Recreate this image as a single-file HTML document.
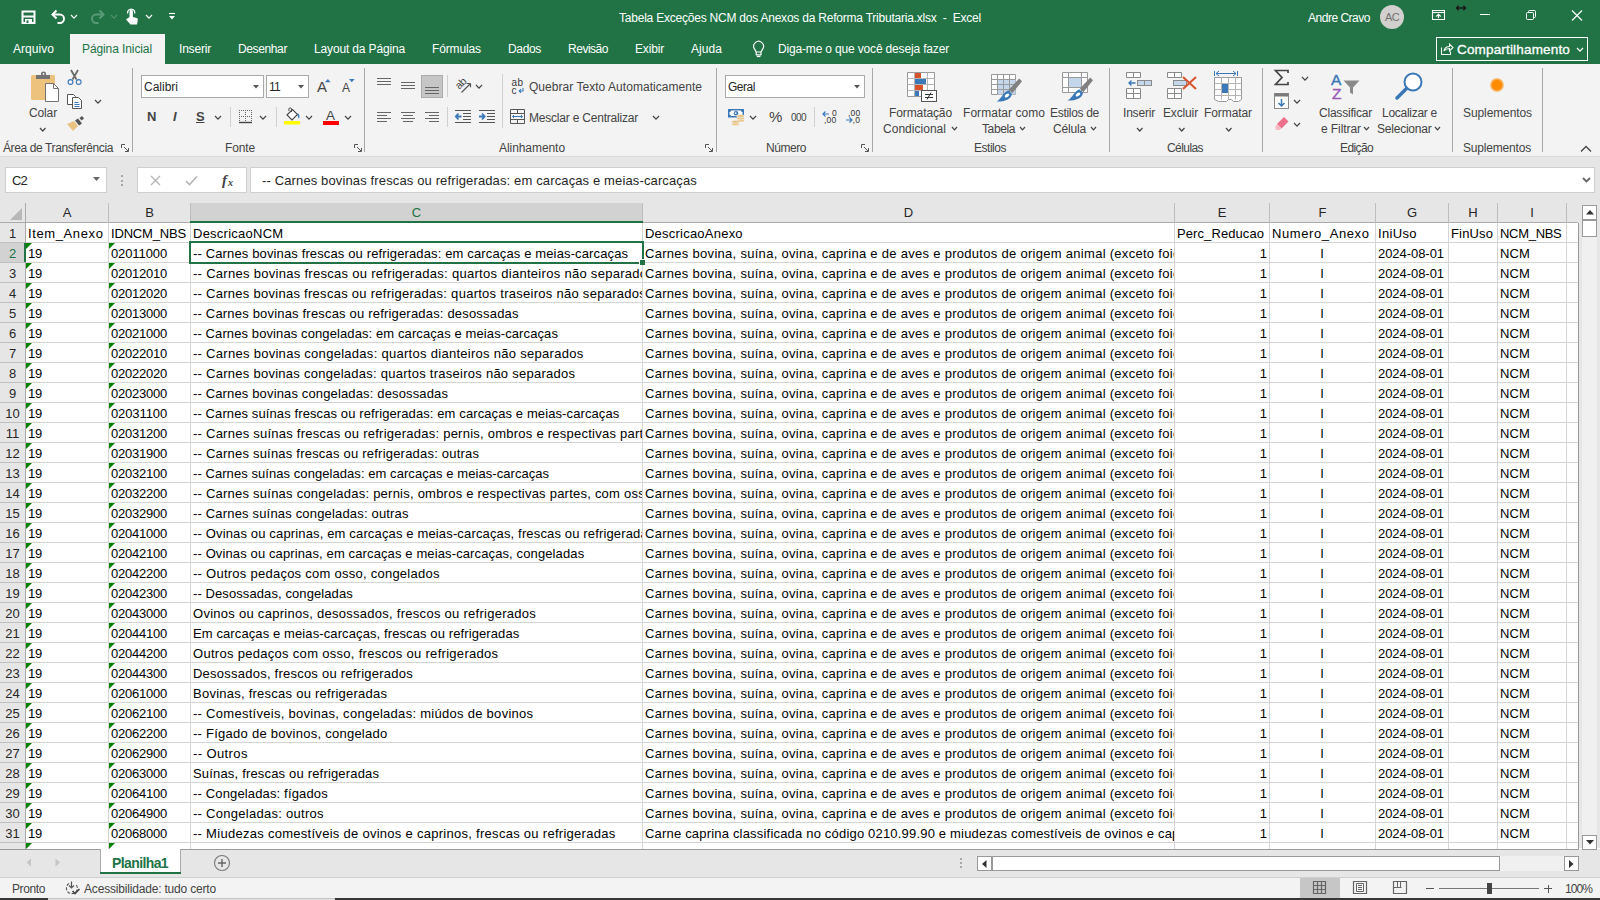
<!DOCTYPE html>
<html lang="pt-BR"><head><meta charset="utf-8"><title>Tabela Exceções NCM dos Anexos da Reforma Tributaria.xlsx - Excel</title>
<style>
html,body{margin:0;padding:0;}
body{width:1600px;height:900px;overflow:hidden;position:relative;background:#fff;font-family:'Liberation Sans',sans-serif;}
.a{position:absolute;box-sizing:border-box;overflow:visible;}
.t{position:absolute;white-space:pre;}
</style></head><body>
<div class="a" style="left:0px;top:0px;width:1600px;height:64px;background:#217346;"></div>
<div class="a" style="left:0px;top:64px;width:1600px;height:92px;background:#f3f3f3;"></div>
<div class="a" style="left:0px;top:156px;width:1600px;height:1px;background:#dadada;"></div>
<div class="a" style="left:0px;top:157px;width:1600px;height:46px;background:#e6e6e6;"></div>
<div class="a" style="left:0px;top:203px;width:1600px;height:20px;background:#e6e6e6;"></div>
<div class="a" style="left:0px;top:849px;width:1600px;height:28px;background:#e6e6e6;"></div>
<div class="a" style="left:0px;top:877px;width:1600px;height:21px;background:#f3f3f3;"></div>
<div class="a" style="left:0px;top:877px;width:1600px;height:1px;background:#cfcfcf;"></div>
<div class="a" style="left:0px;top:898px;width:1600px;height:2px;background:#363636;"></div>
<div class="a" style="left:48px;top:898px;width:287px;height:1px;background:#c4c4c4;"></div>
<div class="a" style="left:48px;top:899px;width:287px;height:1px;background:#e0e0e0;"></div>
<span class="t" style="top:8.5px;height:18px;line-height:18px;font-size:12px;color:#fff;left:619px;letter-spacing:-0.221px;">Tabela Exceções NCM dos Anexos da Reforma Tributaria.xlsx  -  Excel</span>
<span class="t" style="top:8.5px;height:18px;line-height:18px;font-size:12px;color:#fff;left:1308px;letter-spacing:-0.489px;">Andre Cravo</span>
<div class="a" style="left:1380px;top:5px;width:24px;height:24px;border-radius:12px;background:#d2d0ce;"></div>
<span class="t" style="top:9px;height:17px;line-height:17px;font-size:11px;color:#707070;left:1385px;letter-spacing:-0.641px;">AC</span>
<svg class="a" style="left:1432px;top:10px;" width="16" height="14" viewBox="0 0 16 14"><path d="M0.5 0.5h12v9h-12z" fill="none" stroke="#fff" stroke-width="1.1"/><path d="M0.5 2.5h12" stroke="#fff" stroke-width="1.1"/><path d="M6.5 8.3V4.5M4.3 6.5L6.5 4.3l2.2 2.2" fill="none" stroke="#fff" stroke-width="1.1"/></svg>
<svg class="a" style="left:1455px;top:3px;" width="14" height="10" viewBox="0 0 14 10"><path d="M1.5 5h9M3.7 2.7L1.4 5l2.3 2.3M8.3 2.7L10.6 5 8.3 7.3" fill="none" stroke="#1a1a1a" stroke-width="1.4"/></svg>
<div class="a" style="left:1480px;top:14px;width:10px;height:1px;background:#fff;"></div>
<svg class="a" style="left:1526px;top:10px;" width="13" height="13" viewBox="0 0 13 13"><rect x="0.5" y="2.5" width="7" height="7" rx="1" fill="none" stroke="#fff"/><path d="M2.5 2.5V1.5a1 1 0 0 1 1-1h5a1 1 0 0 1 1 1v5a1 1 0 0 1-1 1H7.5" fill="none" stroke="#fff"/></svg>
<svg class="a" style="left:1571px;top:10px;" width="13" height="13" viewBox="0 0 13 13"><path d="M1 0.5L11 10.5M11 0.5L1 10.5" fill="none" stroke="#fff" stroke-width="1.1"/></svg>
<svg class="a" style="left:21px;top:10px;" width="16" height="15" viewBox="0 0 16 15"><path d="M1.5 1.5h12v11.5h-12z" fill="none" stroke="#fff" stroke-width="2"/><path d="M2 6.5h11" stroke="#fff" stroke-width="2"/><rect x="4" y="9" width="7" height="4" fill="#fff"/><rect x="5.5" y="10.5" width="2" height="2.5" fill="#217346"/></svg>
<svg class="a" style="left:50px;top:9px;" width="17" height="16" viewBox="0 0 17 16"><path d="M2.5 5.5h7.3a4.2 4.2 0 0 1 0 8.4H7.5" fill="none" stroke="#fff" stroke-width="2"/><path d="M6.5 1.5L2.5 5.5 6.5 9.5" fill="none" stroke="#fff" stroke-width="2"/></svg>
<svg class="a" style="left:70px;top:14px;" width="8" height="5.2" viewBox="0 0 8 5.2"><path d="M1 1 L4.0 4.2 L7 1" fill="none" stroke="#fff" stroke-width="1.2"/></svg>
<svg class="a" style="left:89px;top:9px;" width="17" height="16" viewBox="0 0 17 16"><path d="M14.5 5.5H7.2a4.2 4.2 0 0 0 0 8.4H9.5" fill="none" stroke="#5a9a78" stroke-width="2"/><path d="M10.5 1.5L14.5 5.5 10.5 9.5" fill="none" stroke="#5a9a78" stroke-width="2"/></svg>
<svg class="a" style="left:110px;top:14px;" width="8" height="5.2" viewBox="0 0 8 5.2"><path d="M1 1 L4.0 4.2 L7 1" fill="none" stroke="#4f8f6b" stroke-width="1.2"/></svg>
<svg class="a" style="left:124px;top:8px;" width="16" height="18" viewBox="0 0 16 18"><path d="M5.5 9V3.5a1.7 1.7 0 0 1 3.4 0V9l3.6 1c1 .300 1.5 1 1.3 2l-.800 4.5H6.5L2.5 12c-.600-.800 0-1.8 1-1.5z" fill="#fff"/><path d="M3.7 5.5a3.6 3.6 0 1 1 7 0" fill="none" stroke="#fff" stroke-width="1.3"/></svg>
<svg class="a" style="left:145px;top:14px;" width="8" height="5.2" viewBox="0 0 8 5.2"><path d="M1 1 L4.0 4.2 L7 1" fill="none" stroke="#fff" stroke-width="1.2"/></svg>
<svg class="a" style="left:168px;top:12px;" width="9" height="9" viewBox="0 0 9 9"><path d="M1 1.5h6" stroke="#fff" stroke-width="1.2"/><path d="M1 4h6L4 7.5z" fill="#fff"/></svg>
<div class="a" style="left:70px;top:34px;width:95px;height:30px;background:#f3f3f3;"></div>
<span class="t" style="top:40px;height:18px;line-height:18px;font-size:12px;color:#fff;left:13px;letter-spacing:0.045px;">Arquivo</span>
<span class="t" style="top:40px;height:18px;line-height:18px;font-size:12px;color:#217346;left:82px;letter-spacing:-0.099px;">Página Inicial</span>
<span class="t" style="top:40px;height:18px;line-height:18px;font-size:12px;color:#fff;left:179px;letter-spacing:-0.192px;">Inserir</span>
<span class="t" style="top:40px;height:18px;line-height:18px;font-size:12px;color:#fff;left:238px;letter-spacing:-0.379px;">Desenhar</span>
<span class="t" style="top:40px;height:18px;line-height:18px;font-size:12px;color:#fff;left:314px;letter-spacing:-0.151px;">Layout da Página</span>
<span class="t" style="top:40px;height:18px;line-height:18px;font-size:12px;color:#fff;left:432px;letter-spacing:-0.127px;">Fórmulas</span>
<span class="t" style="top:40px;height:18px;line-height:18px;font-size:12px;color:#fff;left:508px;letter-spacing:-0.338px;">Dados</span>
<span class="t" style="top:40px;height:18px;line-height:18px;font-size:12px;color:#fff;left:568px;letter-spacing:-0.48px;">Revisão</span>
<span class="t" style="top:40px;height:18px;line-height:18px;font-size:12px;color:#fff;left:635px;letter-spacing:-0.169px;">Exibir</span>
<span class="t" style="top:40px;height:18px;line-height:18px;font-size:12px;color:#fff;left:691px;letter-spacing:0.059px;">Ajuda</span>
<span class="t" style="top:40px;height:18px;line-height:18px;font-size:12px;color:#fff;left:778px;letter-spacing:-0.165px;">Diga-me o que você deseja fazer</span>
<svg class="a" style="left:752px;top:40px;" width="14" height="18" viewBox="0 0 14 18"><path d="M4.2 12L2.6 9.1A4.9 4.9 0 1 1 10.6 9.1L9 12zM4.2 12v2.8h4.8V12" fill="none" stroke="#fff" stroke-width="1.2" stroke-linejoin="round"/><path d="M4.8 16.5h3.6" stroke="#fff" stroke-width="1.2"/></svg>
<div class="a" style="left:1436px;top:37px;width:152px;height:24px;border:1px solid #fff;"></div>
<svg class="a" style="left:1440px;top:42px;" width="14" height="14" viewBox="0 0 14 14"><path d="M1.5 5.5v7h9v-3" fill="none" stroke="#fff" stroke-width="1.1"/><path d="M4 9c.500-3 2.5-4.5 5.5-4.5V2l3.5 3.5L9.5 9V6.5C7 6.5 5.5 7 4 9z" fill="none" stroke="#fff" stroke-width="1.1"/></svg>
<span class="t" style="top:39.75px;height:19.5px;line-height:19.5px;font-size:13.5px;color:#fff;left:1457px;letter-spacing:0.168px;-webkit-text-stroke:0.3px #fff;">Compartilhamento</span>
<svg class="a" style="left:1576px;top:47px;" width="8" height="5.2" viewBox="0 0 8 5.2"><path d="M1 1 L4.0 4.2 L7 1" fill="none" stroke="#fff" stroke-width="1.2"/></svg>
<div class="a" style="left:132px;top:68px;width:1px;height:84px;background:#a8a8a8;"></div>
<div class="a" style="left:364px;top:68px;width:1px;height:84px;background:#a8a8a8;"></div>
<div class="a" style="left:716px;top:68px;width:1px;height:84px;background:#a8a8a8;"></div>
<div class="a" style="left:872px;top:68px;width:1px;height:84px;background:#a8a8a8;"></div>
<div class="a" style="left:1109px;top:68px;width:1px;height:84px;background:#a8a8a8;"></div>
<div class="a" style="left:1262px;top:68px;width:1px;height:84px;background:#a8a8a8;"></div>
<div class="a" style="left:1452px;top:68px;width:1px;height:84px;background:#a8a8a8;"></div>
<div class="a" style="left:1542px;top:68px;width:1px;height:84px;background:#a8a8a8;"></div>
<div class="a" style="left:230px;top:107px;width:1px;height:20px;background:#d0d0d0;"></div>
<div class="a" style="left:276px;top:107px;width:1px;height:20px;background:#d0d0d0;"></div>
<div class="a" style="left:447px;top:75px;width:1px;height:22px;background:#d0d0d0;"></div>
<div class="a" style="left:447px;top:107px;width:1px;height:20px;background:#d0d0d0;"></div>
<div class="a" style="left:502px;top:74px;width:1px;height:54px;background:#d0d0d0;"></div>
<div class="a" style="left:814px;top:107px;width:1px;height:20px;background:#d0d0d0;"></div>
<span class="t" style="top:138.5px;height:18px;line-height:18px;font-size:12px;color:#444444;left:3px;letter-spacing:-0.385px;">Área de Transferência</span>
<span class="t" style="top:138.5px;height:18px;line-height:18px;font-size:12px;color:#444444;left:225px;letter-spacing:-0.138px;">Fonte</span>
<span class="t" style="top:138.5px;height:18px;line-height:18px;font-size:12px;color:#444444;left:499px;letter-spacing:-0.065px;">Alinhamento</span>
<span class="t" style="top:138.5px;height:18px;line-height:18px;font-size:12px;color:#444444;left:766px;letter-spacing:-0.448px;">Número</span>
<span class="t" style="top:138.5px;height:18px;line-height:18px;font-size:12px;color:#444444;left:974px;letter-spacing:-0.478px;">Estilos</span>
<span class="t" style="top:138.5px;height:18px;line-height:18px;font-size:12px;color:#444444;left:1167px;letter-spacing:-0.576px;">Células</span>
<span class="t" style="top:138.5px;height:18px;line-height:18px;font-size:12px;color:#444444;left:1340px;letter-spacing:-0.617px;">Edição</span>
<span class="t" style="top:138.5px;height:18px;line-height:18px;font-size:12px;color:#444444;left:1463px;letter-spacing:-0.186px;">Suplementos</span>
<svg class="a" style="left:121px;top:144px;" width="8" height="8" viewBox="0 0 8 8"><path d="M0.5 4V0.5H4" fill="none" stroke="#555"/><path d="M3 3l4 4M7.5 4v3.5H4" fill="none" stroke="#555"/></svg>
<svg class="a" style="left:354px;top:144px;" width="8" height="8" viewBox="0 0 8 8"><path d="M0.5 4V0.5H4" fill="none" stroke="#555"/><path d="M3 3l4 4M7.5 4v3.5H4" fill="none" stroke="#555"/></svg>
<svg class="a" style="left:705px;top:144px;" width="8" height="8" viewBox="0 0 8 8"><path d="M0.5 4V0.5H4" fill="none" stroke="#555"/><path d="M3 3l4 4M7.5 4v3.5H4" fill="none" stroke="#555"/></svg>
<svg class="a" style="left:861px;top:144px;" width="8" height="8" viewBox="0 0 8 8"><path d="M0.5 4V0.5H4" fill="none" stroke="#555"/><path d="M3 3l4 4M7.5 4v3.5H4" fill="none" stroke="#555"/></svg>
<svg class="a" style="left:1580px;top:145px;" width="12" height="8" viewBox="0 0 12 8"><path d="M1 6.5L6 1.5l5 5" fill="none" stroke="#444" stroke-width="1.3"/></svg>
<svg class="a" style="left:30px;top:70px;" width="30" height="32" viewBox="0 0 30 32"><rect x="1" y="5" width="24" height="25" rx="1.5" fill="#ecc27d"/><rect x="6" y="5" width="14" height="4" fill="#737373"/><path d="M11 5.5V3.5a2.5 2 0 0 1 5 0V5.5z" fill="#737373"/><circle cx="13.5" cy="4" r="0.9" fill="#f3f3f3"/><path d="M15.5 13.5h8l5 5v13h-13z" fill="#fff" stroke="#737373"/><path d="M23.5 13.5v5h5" fill="none" stroke="#737373"/></svg>
<span class="t" style="top:103.5px;height:18px;line-height:18px;font-size:12px;color:#444444;left:29px;letter-spacing:-0.138px;">Colar</span>
<svg class="a" style="left:38.5px;top:126.5px;" width="7.5" height="5" viewBox="0 0 7.5 5"><path d="M1 1 L3.75 4 L6.5 1" fill="none" stroke="#444444" stroke-width="1.2"/></svg>
<svg class="a" style="left:66px;top:69px;" width="17" height="17" viewBox="0 0 17 17"><path d="M5 1l5.5 9.5M12 1L6.5 10.5" stroke="#6a6a6a" stroke-width="1.8" fill="none"/><circle cx="4.5" cy="13" r="2.4" fill="none" stroke="#3b78b8" stroke-width="1.1"/><circle cx="12.7" cy="13" r="2.4" fill="none" stroke="#3b78b8" stroke-width="1.1"/></svg>
<svg class="a" style="left:66px;top:92px;" width="17" height="17" viewBox="0 0 17 17"><path d="M1.5 2.5h6l2 2v8h-8z" fill="#fff" stroke="#555"/><path d="M6.5 5.5h6l3 3v8h-9z" fill="#fff" stroke="#555"/><path d="M8.5 10.5h4M8.5 12.5h5M8.5 14.5h5" stroke="#3b78b8"/></svg>
<svg class="a" style="left:93.5px;top:99px;" width="8" height="5.2" viewBox="0 0 8 5.2"><path d="M1 1 L4.0 4.2 L7 1" fill="none" stroke="#444444" stroke-width="1.2"/></svg>
<svg class="a" style="left:66px;top:115px;" width="19" height="17" viewBox="0 0 19 17"><path d="M1 9l7-3 4 5-5 5z" fill="#eac282"/><path d="M9 5.5l3-2 4 5-3 2z" fill="#555"/><path d="M13.5 3L16 1l2 2.5-2.5 2z" fill="#555"/></svg>
<div class="a" style="left:141px;top:75px;width:123px;height:23px;background:#fff;border:1px solid #ababab;"></div>
<span class="t" style="top:78px;height:18px;line-height:18px;font-size:12px;color:#262626;left:144px;letter-spacing:-0.002px;">Calibri</span>
<div class="a" style="left:266px;top:75px;width:43px;height:23px;background:#fff;border:1px solid #ababab;"></div>
<span class="t" style="top:78px;height:18px;line-height:18px;font-size:12px;color:#262626;left:269px;letter-spacing:-0.734px;">11</span>
<svg class="a" style="left:253px;top:85px;" width="7" height="4" viewBox="0 0 7 4"><path d="M0 0h6L3 3.5z" fill="#555"/></svg>
<svg class="a" style="left:298px;top:85px;" width="7" height="4" viewBox="0 0 7 4"><path d="M0 0h6L3 3.5z" fill="#555"/></svg>
<span class="t" style="top:75.5px;height:21px;line-height:21px;font-size:15px;color:#444444;left:317px;letter-spacing:0.984px;">A</span>
<svg class="a" style="left:324.5px;top:79px;" width="6" height="4" viewBox="0 0 6 4"><path d="M0 3.2h5.6L2.8 0z" fill="#3b78b8"/></svg>
<span class="t" style="top:79px;height:18px;line-height:18px;font-size:12px;color:#444444;left:342px;letter-spacing:-0.016px;">A</span>
<svg class="a" style="left:348.5px;top:79px;" width="6" height="4" viewBox="0 0 6 4"><path d="M0 0h5.6L2.8 3.2z" fill="#3b78b8"/></svg>
<span class="t" style="top:106.5px;height:19px;line-height:19px;font-size:13px;color:#444444;left:147px;font-weight:bold;letter-spacing:0.609px;">N</span>
<span class="t" style="top:106.5px;height:19px;line-height:19px;font-size:13px;color:#444444;left:173px;font-weight:bold;font-style:italic;letter-spacing:1.375px;">I</span>
<span class="t" style="top:106.5px;height:19px;line-height:19px;font-size:13px;color:#444444;left:196px;font-weight:bold;letter-spacing:-0.172px;text-decoration:underline;">S</span>
<svg class="a" style="left:214px;top:115px;" width="8" height="5.2" viewBox="0 0 8 5.2"><path d="M1 1 L4.0 4.2 L7 1" fill="none" stroke="#444444" stroke-width="1.2"/></svg>
<svg class="a" style="left:239px;top:110px;" width="14" height="14" viewBox="0 0 14 14"><path d="M0 0.5h13M0 6.5h13M0.5 0v13M6.5 0v13M12.5 0v13" fill="none" stroke="#666" stroke-dasharray="1 1"/><path d="M0 12.5h13" stroke="#444" stroke-width="1.4"/></svg>
<svg class="a" style="left:259px;top:115px;" width="8" height="5.2" viewBox="0 0 8 5.2"><path d="M1 1 L4.0 4.2 L7 1" fill="none" stroke="#444444" stroke-width="1.2"/></svg>
<svg class="a" style="left:284px;top:108px;" width="18" height="17" viewBox="0 0 18 17"><rect x="0" y="13" width="16" height="3.5" fill="#ffff00"/><path d="M3 7L8.5 1.5l5 5L8 12z" fill="#fff" stroke="#444" stroke-width="1.1"/><path d="M7.5 4V1.2a1.3 1.3 0 0 0-2.6 0V3" fill="none" stroke="#444"/><path d="M13.5 5c2 1 2.5 3.5 1.5 6-1-1.5-1.5-3-1.5-6z" fill="#3b78b8"/></svg>
<svg class="a" style="left:305px;top:115px;" width="8" height="5.2" viewBox="0 0 8 5.2"><path d="M1 1 L4.0 4.2 L7 1" fill="none" stroke="#444444" stroke-width="1.2"/></svg>
<span class="t" style="top:105.75px;height:19.5px;line-height:19.5px;font-size:13.5px;color:#444444;left:326px;letter-spacing:0.984px;">A</span>
<div class="a" style="left:323px;top:121px;width:16px;height:4px;background:#ff0000;"></div>
<svg class="a" style="left:344px;top:115px;" width="8" height="5.2" viewBox="0 0 8 5.2"><path d="M1 1 L4.0 4.2 L7 1" fill="none" stroke="#444444" stroke-width="1.2"/></svg>
<svg class="a" style="left:377px;top:78px;" width="16" height="9" viewBox="0 0 16 9"><rect x="0" y="0" width="14" height="1" fill="#666"/><rect x="0" y="3" width="14" height="1" fill="#666"/><rect x="0" y="6" width="14" height="1" fill="#666"/></svg>
<svg class="a" style="left:401px;top:82px;" width="16" height="9" viewBox="0 0 16 9"><rect x="0" y="0" width="14" height="1" fill="#666"/><rect x="0" y="3" width="14" height="1" fill="#666"/><rect x="0" y="6" width="14" height="1" fill="#666"/></svg>
<div class="a" style="left:421px;top:75px;width:22px;height:23px;background:#c6c6c6;border:1px solid #ababab;"></div>
<svg class="a" style="left:425px;top:87px;" width="16" height="9" viewBox="0 0 16 9"><rect x="0" y="0" width="14" height="1" fill="#666"/><rect x="0" y="3" width="14" height="1" fill="#666"/><rect x="0" y="6" width="14" height="1" fill="#666"/></svg>
<svg class="a" style="left:455px;top:77px;" width="18" height="18" viewBox="0 0 18 18"><path d="M6.5 15.5L15.5 6.5M15.5 6.5h-3.8M15.5 6.5v3.8" fill="none" stroke="#555" stroke-width="1.2"/></svg>
<span class="t" style="top:74.75px;height:16.5px;line-height:16.5px;font-size:10.5px;color:#444;left:454.5px;letter-spacing:-0.344px;transform:rotate(-45deg);">ab</span>
<svg class="a" style="left:474.5px;top:84px;" width="8" height="5.2" viewBox="0 0 8 5.2"><path d="M1 1 L4.0 4.2 L7 1" fill="none" stroke="#444444" stroke-width="1.2"/></svg>
<span class="t" style="top:74.5px;height:16px;line-height:16px;font-size:10px;color:#3a3a3a;left:511.5px;letter-spacing:0.438px;">ab</span>
<span class="t" style="top:82.5px;height:16px;line-height:16px;font-size:10px;color:#3a3a3a;left:511.5px;letter-spacing:1px;">c</span>
<svg class="a" style="left:518px;top:87.5px;" width="7" height="6" viewBox="0 0 7 6"><path d="M5 0v3H1.5M3 1.2L1.2 3l1.8 1.8" fill="none" stroke="#3b78b8" stroke-width="1.1"/></svg>
<span class="t" style="top:78px;height:18px;line-height:18px;font-size:12px;color:#444444;left:529px;letter-spacing:0.039px;">Quebrar Texto Automaticamente</span>
<svg class="a" style="left:377px;top:112px;" width="16" height="12" viewBox="0 0 16 12"><rect x="0" y="0" width="14" height="1" fill="#666"/><rect x="0" y="3" width="10" height="1" fill="#666"/><rect x="0" y="6" width="14" height="1" fill="#666"/><rect x="0" y="9" width="10" height="1" fill="#666"/></svg>
<svg class="a" style="left:401px;top:112px;" width="16" height="12" viewBox="0 0 16 12"><rect x="0" y="0" width="14" height="1" fill="#666"/><rect x="2" y="3" width="10" height="1" fill="#666"/><rect x="0" y="6" width="14" height="1" fill="#666"/><rect x="2" y="9" width="10" height="1" fill="#666"/></svg>
<svg class="a" style="left:425px;top:112px;" width="16" height="12" viewBox="0 0 16 12"><rect x="0" y="0" width="14" height="1" fill="#666"/><rect x="4" y="3" width="10" height="1" fill="#666"/><rect x="0" y="6" width="14" height="1" fill="#666"/><rect x="4" y="9" width="10" height="1" fill="#666"/></svg>
<svg class="a" style="left:455px;top:110px;" width="17" height="14" viewBox="0 0 17 14"><path d="M0 0.5h16M8 3.5h8M8 6.5h8M8 9.5h8M0 12.5h16" stroke="#555"/><path d="M6.5 6.5h-5.5M3.5 3.5L0.8 6.5 3.5 9.5" fill="none" stroke="#3b78b8" stroke-width="1.8"/></svg>
<svg class="a" style="left:479px;top:110px;" width="17" height="14" viewBox="0 0 17 14"><path d="M0 0.5h16M8 3.5h8M8 6.5h8M8 9.5h8M0 12.5h16" stroke="#555"/><path d="M0 6.5h5.5M3 3.5L5.7 6.5 3 9.5" fill="none" stroke="#3b78b8" stroke-width="1.8"/></svg>
<svg class="a" style="left:510px;top:109px;" width="16" height="16" viewBox="0 0 16 16"><path d="M0.5 0.5h14v14h-14zM0.5 4.5h14M0.5 10.5h14M7.5 0.5v4M7.5 10.5v4" fill="none" stroke="#555"/><path d="M2.5 7.5h10M4 6l-1.5 1.5L4 9M11 6l1.5 1.5L11 9" fill="none" stroke="#3b78b8"/></svg>
<span class="t" style="top:108.5px;height:18px;line-height:18px;font-size:12px;color:#444444;left:529px;letter-spacing:-0.208px;">Mesclar e Centralizar</span>
<svg class="a" style="left:652px;top:115px;" width="8" height="5.2" viewBox="0 0 8 5.2"><path d="M1 1 L4.0 4.2 L7 1" fill="none" stroke="#444444" stroke-width="1.2"/></svg>
<div class="a" style="left:725px;top:75px;width:140px;height:23px;background:#fff;border:1px solid #ababab;"></div>
<span class="t" style="top:78px;height:18px;line-height:18px;font-size:12px;color:#262626;left:728px;letter-spacing:-0.469px;">Geral</span>
<svg class="a" style="left:854px;top:85px;" width="7" height="4" viewBox="0 0 7 4"><path d="M0 0h6L3 3.5z" fill="#555"/></svg>
<svg class="a" style="left:727px;top:108px;" width="19" height="19" viewBox="0 0 19 19"><rect x="1" y="1" width="16" height="8.5" fill="#3b78b8"/><path d="M4 2.5h10a1.5 1.5 0 0 0 1.5 1.5v2.5a1.5 1.5 0 0 0-1.5 1.5H4a1.5 1.5 0 0 0-1.5-1.5V4A1.5 1.5 0 0 0 4 2.5z" fill="#fff"/><circle cx="9" cy="5.2" r="2.3" fill="#3b78b8"/><circle cx="8.6" cy="5.2" r="0.9" fill="#fff"/><g fill="#eac282" stroke="#f3f3f3" stroke-width="0.6"><ellipse cx="13.5" cy="12.5" rx="3.8" ry="1.5"/><ellipse cx="13.5" cy="10.3" rx="3.8" ry="1.5"/><ellipse cx="13.5" cy="8.1" rx="3.8" ry="1.5"/><ellipse cx="8.5" cy="16" rx="3.8" ry="1.5"/><ellipse cx="8.5" cy="13.8" rx="3.8" ry="1.5"/></g></svg>
<svg class="a" style="left:749px;top:115px;" width="8" height="5.2" viewBox="0 0 8 5.2"><path d="M1 1 L4.0 4.2 L7 1" fill="none" stroke="#444444" stroke-width="1.2"/></svg>
<span class="t" style="top:106px;height:21px;line-height:21px;font-size:15px;color:#444444;left:769px;letter-spacing:-0.344px;">%</span>
<span class="t" style="top:109.5px;height:16px;line-height:16px;font-size:10px;color:#444444;left:791px;letter-spacing:-0.562px;">000</span>
<span class="t" style="top:105.75px;height:14.5px;line-height:14.5px;font-size:8.5px;color:#333;left:832px;letter-spacing:0.266px;">0</span>
<span class="t" style="top:113.25px;height:14.5px;line-height:14.5px;font-size:8.5px;color:#333;left:824px;letter-spacing:0.224px;">,00</span>
<svg class="a" style="left:821.5px;top:110.5px;" width="8" height="6" viewBox="0 0 8 6"><path d="M7 3H1M3.5 0.5L1 3l2.5 2.5" fill="none" stroke="#3b78b8" stroke-width="1.2"/></svg>
<span class="t" style="top:105.75px;height:14.5px;line-height:14.5px;font-size:8.5px;color:#333;left:848px;letter-spacing:0.224px;">,00</span>
<span class="t" style="top:113.25px;height:14.5px;line-height:14.5px;font-size:8.5px;color:#333;left:852.5px;letter-spacing:0.453px;">,0</span>
<svg class="a" style="left:846px;top:117px;" width="8" height="6" viewBox="0 0 8 6"><path d="M0 3h6M3.5 0.5L6 3 3.5 5.5" fill="none" stroke="#3b78b8" stroke-width="1.2"/></svg>
<svg class="a" style="left:907px;top:72px;" width="32" height="32" viewBox="0 0 32 32"><path d="M0.5 0.5h27v24h-27z" fill="#fff" stroke="#9a9a9a"/><path d="M0.5 6.5h27M0.5 12.5h27M0.5 18.5h27M7.5 0.5v24M20.5 0.5v24" stroke="#b5b5b5" fill="none"/><rect x="8" y="1" width="6" height="5" fill="#d8532b"/><rect x="8" y="7" width="11" height="5" fill="#3b78b8"/><rect x="8" y="13" width="8" height="5" fill="#d8532b"/><rect x="8" y="19" width="4" height="5" fill="#3b78b8"/><rect x="14.5" y="18.5" width="15" height="11" fill="#fff" stroke="#555"/><path d="M18 22.5h8M18 25.5h8M24 20.5l-4 7" stroke="#333" fill="none"/></svg>
<span class="t" style="top:103.5px;height:18px;line-height:18px;font-size:12px;color:#444444;left:889px;letter-spacing:-0.103px;">Formatação</span>
<span class="t" style="top:119.5px;height:18px;line-height:18px;font-size:12px;color:#444444;left:883px;letter-spacing:0.026px;">Condicional</span>
<svg class="a" style="left:950.5px;top:126px;" width="7" height="4.8" viewBox="0 0 7 4.8"><path d="M1 1 L3.5 3.8 L6 1" fill="none" stroke="#444444" stroke-width="1.2"/></svg>
<svg class="a" style="left:991px;top:74px;" width="32" height="30" viewBox="0 0 32 30"><path d="M0.5 0.5h24v20h-24z" fill="#fff" stroke="#9a9a9a"/><rect x="6.5" y="5.5" width="18" height="15" fill="#c3d6ec"/><path d="M0.5 5.5h24M0.5 10.5h24M0.5 15.5h24M6.5 0.5v20M12.5 0.5v20M18.5 0.5v20" stroke="#9a9a9a" fill="none"/><g transform="translate(0 0)"><path d="M28.2 4.5L31 7.3 21.3 19.3 17.8 15.8z" fill="#808080"/><path d="M17.3 16.3L21 20C20 25.5 13.5 27.8 5.5 27.6 10.5 25 11.5 19 17.3 16.3z" fill="#3b78b8"/><ellipse cx="16" cy="21.5" rx="2.6" ry="1.6" fill="#fff" transform="rotate(-35 16 21.5)"/></g></svg>
<span class="t" style="top:103.5px;height:18px;line-height:18px;font-size:12px;color:#444444;left:963px;letter-spacing:0.049px;">Formatar como</span>
<span class="t" style="top:119.5px;height:18px;line-height:18px;font-size:12px;color:#444444;left:982px;letter-spacing:-0.396px;">Tabela</span>
<svg class="a" style="left:1018.5px;top:126px;" width="7" height="4.8" viewBox="0 0 7 4.8"><path d="M1 1 L3.5 3.8 L6 1" fill="none" stroke="#444444" stroke-width="1.2"/></svg>
<svg class="a" style="left:1062px;top:72px;" width="32" height="30" viewBox="0 0 32 30"><path d="M0.5 0.5h25v20h-25z" fill="#fff" stroke="#9a9a9a"/><rect x="6.5" y="5.5" width="13" height="10" fill="#c3d6ec"/><path d="M0.5 5.5h25M0.5 15.5h25M6.5 0.5v20M19.5 0.5v20" stroke="#9a9a9a" fill="none"/><g transform="translate(0 1)"><path d="M28.2 4.5L31 7.3 21.3 19.3 17.8 15.8z" fill="#808080"/><path d="M17.3 16.3L21 20C20 25.5 13.5 27.8 5.5 27.6 10.5 25 11.5 19 17.3 16.3z" fill="#3b78b8"/><ellipse cx="16" cy="21.5" rx="2.6" ry="1.6" fill="#fff" transform="rotate(-35 16 21.5)"/></g></svg>
<span class="t" style="top:103.5px;height:18px;line-height:18px;font-size:12px;color:#444444;left:1050px;letter-spacing:-0.303px;">Estilos de</span>
<span class="t" style="top:119.5px;height:18px;line-height:18px;font-size:12px;color:#444444;left:1053px;letter-spacing:-0.172px;">Célula</span>
<svg class="a" style="left:1089.5px;top:126px;" width="7" height="4.8" viewBox="0 0 7 4.8"><path d="M1 1 L3.5 3.8 L6 1" fill="none" stroke="#444444" stroke-width="1.2"/></svg>
<svg class="a" style="left:1126px;top:72px;" width="28" height="28" viewBox="0 0 28 28"><path d="M0.5 0.5h14v5h-14zM7.5 0.5v5" fill="#fff" stroke="#8a8a8a"/><path d="M0.5 16.5h14v10h-14zM7.5 16.5v10M0.5 21.5h14" fill="#fff" stroke="#8a8a8a"/><rect x="11.5" y="8.5" width="14" height="5" fill="#c3d6ec" stroke="#8a8a8a"/><path d="M18.5 8.5v5" stroke="#8a8a8a"/><path d="M9.5 11H3M5.5 8.5L3 11l2.5 2.5" fill="none" stroke="#3b78b8" stroke-width="1.4"/></svg>
<span class="t" style="top:103.5px;height:18px;line-height:18px;font-size:12px;color:#444444;left:1123px;letter-spacing:-0.192px;">Inserir</span>
<svg class="a" style="left:1135.5px;top:126.5px;" width="7.5" height="5" viewBox="0 0 7.5 5"><path d="M1 1 L3.75 4 L6.5 1" fill="none" stroke="#444444" stroke-width="1.2"/></svg>
<svg class="a" style="left:1167px;top:72px;" width="32" height="28" viewBox="0 0 32 28"><path d="M0.5 0.5h14v5h-14zM7.5 0.5v5" fill="#fff" stroke="#8a8a8a"/><path d="M0.5 16.5h14v10h-14zM7.5 16.5v10M0.5 21.5h14" fill="#fff" stroke="#8a8a8a"/><rect x="6.5" y="8.5" width="13" height="5" fill="#c3d6ec" stroke="#8a8a8a"/><path d="M16 5l13 12M29 5L16 17" fill="none" stroke="#d8532b" stroke-width="2"/></svg>
<span class="t" style="top:103.5px;height:18px;line-height:18px;font-size:12px;color:#444444;left:1163px;letter-spacing:-0.145px;">Excluir</span>
<svg class="a" style="left:1177.5px;top:126.5px;" width="7.5" height="5" viewBox="0 0 7.5 5"><path d="M1 1 L3.75 4 L6.5 1" fill="none" stroke="#444444" stroke-width="1.2"/></svg>
<svg class="a" style="left:1214px;top:70px;" width="30" height="32" viewBox="0 0 30 32"><path d="M0.5 1v5M23.5 1v5M2 3.5h20M5 1L2 3.5 5 6M19 1l3 2.5L19 6" fill="none" stroke="#3b78b8"/><path d="M0.5 7.5h27v22l-3 2h-5l-2-2h-3l-2 2h-8l-4-2z" fill="#fff" stroke="#9a9a9a"/><path d="M0.5 13.5h27M0.5 19.5h27M0.5 25.5h27M7.5 7.5v22M14.5 7.5v22M21.5 7.5v22" fill="none" stroke="#b5b5b5"/><rect x="8" y="14" width="6" height="9" fill="#3b78b8"/></svg>
<span class="t" style="top:103.5px;height:18px;line-height:18px;font-size:12px;color:#444444;left:1204px;letter-spacing:-0.086px;">Formatar</span>
<svg class="a" style="left:1224.5px;top:126.5px;" width="7.5" height="5" viewBox="0 0 7.5 5"><path d="M1 1 L3.75 4 L6.5 1" fill="none" stroke="#444444" stroke-width="1.2"/></svg>
<svg class="a" style="left:1274px;top:69px;" width="16" height="17" viewBox="0 0 16 17"><path d="M14 4V1.5H1.5L8 8.5 1.5 15.5H14V13" fill="none" stroke="#444" stroke-width="1.7"/></svg>
<svg class="a" style="left:1301px;top:76px;" width="8" height="5.2" viewBox="0 0 8 5.2"><path d="M1 1 L4.0 4.2 L7 1" fill="none" stroke="#444444" stroke-width="1.2"/></svg>
<svg class="a" style="left:1274px;top:93px;" width="16" height="17" viewBox="0 0 16 17"><rect x="0.5" y="0.5" width="14" height="15" fill="#fff" stroke="#8a8a8a"/><rect x="0.5" y="0.5" width="14" height="3" fill="#7a7a7a"/><path d="M7.5 6v7M4.5 10l3 3 3-3" fill="none" stroke="#3b78b8" stroke-width="1.5"/></svg>
<svg class="a" style="left:1293px;top:99px;" width="8" height="5.2" viewBox="0 0 8 5.2"><path d="M1 1 L4.0 4.2 L7 1" fill="none" stroke="#444444" stroke-width="1.2"/></svg>
<svg class="a" style="left:1274px;top:116px;" width="16" height="15" viewBox="0 0 16 15"><path d="M10 1l4.5 4.5-7 7L3 8z" fill="#ef6f8a"/><path d="M3 8l4.5 4.5-2 1.5H2.5L1 12z" fill="#f7b9c4"/></svg>
<svg class="a" style="left:1293px;top:122px;" width="8" height="5.2" viewBox="0 0 8 5.2"><path d="M1 1 L4.0 4.2 L7 1" fill="none" stroke="#444444" stroke-width="1.2"/></svg>
<span class="t" style="top:68.75px;height:21.5px;line-height:21.5px;font-size:15.5px;color:#3b78b8;left:1331px;letter-spacing:1.656px;-webkit-text-stroke:0.4px #3b78b8;">A</span>
<span class="t" style="top:82.75px;height:21.5px;line-height:21.5px;font-size:15.5px;color:#9b59b6;left:1332px;letter-spacing:1.531px;-webkit-text-stroke:0.4px #9b59b6;">Z</span>
<svg class="a" style="left:1343px;top:80px;" width="18" height="16" viewBox="0 0 18 16"><path d="M0.5 0.5h16L10 7.5v7l-3-2V7.5z" fill="#8a8a8a"/></svg>
<span class="t" style="top:103.5px;height:18px;line-height:18px;font-size:12px;color:#444444;left:1319px;letter-spacing:-0.213px;">Classificar</span>
<span class="t" style="top:119.5px;height:18px;line-height:18px;font-size:12px;color:#444444;left:1321px;letter-spacing:-0.075px;">e Filtrar</span>
<svg class="a" style="left:1362.5px;top:126px;" width="7" height="4.8" viewBox="0 0 7 4.8"><path d="M1 1 L3.5 3.8 L6 1" fill="none" stroke="#444444" stroke-width="1.2"/></svg>
<svg class="a" style="left:1395px;top:71px;" width="30" height="30" viewBox="0 0 30 30"><circle cx="18" cy="11" r="8.5" fill="#fff" stroke="#3b78b8" stroke-width="2"/><path d="M11.5 17.5L2 27" stroke="#3b78b8" stroke-width="3.5" stroke-linecap="round"/></svg>
<span class="t" style="top:103.5px;height:18px;line-height:18px;font-size:12px;color:#444444;left:1382px;letter-spacing:-0.276px;">Localizar e</span>
<span class="t" style="top:119.5px;height:18px;line-height:18px;font-size:12px;color:#444444;left:1377px;letter-spacing:-0.22px;">Selecionar</span>
<svg class="a" style="left:1433.5px;top:126px;" width="7" height="4.8" viewBox="0 0 7 4.8"><path d="M1 1 L3.5 3.8 L6 1" fill="none" stroke="#444444" stroke-width="1.2"/></svg>
<div class="a" style="left:1490px;top:78px;width:14px;height:14px;border-radius:7px;background:radial-gradient(circle,#ff8c00 45%,rgba(255,140,0,0.5) 65%,rgba(255,140,0,0) 85%);"></div>
<span class="t" style="top:103.5px;height:18px;line-height:18px;font-size:12px;color:#444444;left:1463px;letter-spacing:-0.095px;">Suplementos</span>
<div class="a" style="left:5px;top:167px;width:102px;height:26px;background:#fff;border:1px solid #cfcfcf;"></div>
<span class="t" style="top:171px;height:19px;line-height:19px;font-size:13px;color:#262626;left:12px;letter-spacing:-0.812px;">C2</span>
<svg class="a" style="left:93px;top:177px;" width="8" height="5" viewBox="0 0 8 5"><path d="M0 0h7L3.5 4z" fill="#666"/></svg>
<div class="a" style="left:121px;top:175px;width:2px;height:2px;background:#a6a6a6;"></div>
<div class="a" style="left:121px;top:179.5px;width:2px;height:2px;background:#a6a6a6;"></div>
<div class="a" style="left:121px;top:184px;width:2px;height:2px;background:#a6a6a6;"></div>
<div class="a" style="left:137px;top:167px;width:110px;height:26px;background:#fff;border:1px solid #cfcfcf;"></div>
<svg class="a" style="left:150px;top:175px;" width="11" height="11" viewBox="0 0 11 11"><path d="M1 1l9 9M10 1l-9 9" stroke="#b5b5b5" stroke-width="1.3" fill="none"/></svg>
<svg class="a" style="left:185px;top:175px;" width="14" height="11" viewBox="0 0 14 11"><path d="M1 6l3.5 3.5L12 1.5" stroke="#b5b5b5" stroke-width="1.6" fill="none"/></svg>
<span class="t" style="top:169.5px;height:21px;line-height:21px;font-size:15px;color:#444;left:222px;font-weight:bold;font-style:italic;letter-spacing:1px;font-family:'Liberation Serif',serif;">f</span>
<span class="t" style="top:174.5px;height:16px;line-height:16px;font-size:10px;color:#444;left:228px;font-weight:bold;font-style:italic;letter-spacing:0.438px;font-family:'Liberation Serif',serif;">x</span>
<div class="a" style="left:250px;top:167px;width:1345px;height:26px;background:#fff;border:1px solid #cfcfcf;"></div>
<span class="t" style="top:171px;height:19px;line-height:19px;font-size:13px;color:#262626;left:262px;letter-spacing:0.133px;">-- Carnes bovinas frescas ou refrigeradas: em carcaças e meias-carcaças</span>
<svg class="a" style="left:1582px;top:176.5px;" width="10" height="7" viewBox="0 0 10 7"><path d="M1 1l3.5 3.5 3.5-3.5" stroke="#666" stroke-width="1.8" fill="none"/></svg>
<div class="a" style="left:0px;top:223px;width:25px;height:626px;background:#e6e6e6;"></div>
<div class="a" style="left:25px;top:223px;width:1553px;height:626px;background:#fff;"></div>
<div class="a" style="left:191px;top:203px;width:451px;height:20px;background:#d2d2d2;"></div>
<div class="a" style="left:0px;top:243px;width:25px;height:19px;background:#d2d2d2;"></div>
<div class="a" style="left:0px;top:222px;width:1578px;height:1px;background:#ababab;"></div>
<div class="a" style="left:25px;top:203px;width:1px;height:20px;background:#ababab;"></div>
<div class="a" style="left:108px;top:203px;width:1px;height:20px;background:#bdbdbd;"></div>
<div class="a" style="left:190px;top:203px;width:1px;height:20px;background:#bdbdbd;"></div>
<div class="a" style="left:642px;top:203px;width:1px;height:20px;background:#bdbdbd;"></div>
<div class="a" style="left:1174px;top:203px;width:1px;height:20px;background:#bdbdbd;"></div>
<div class="a" style="left:1269px;top:203px;width:1px;height:20px;background:#bdbdbd;"></div>
<div class="a" style="left:1375px;top:203px;width:1px;height:20px;background:#bdbdbd;"></div>
<div class="a" style="left:1448px;top:203px;width:1px;height:20px;background:#bdbdbd;"></div>
<div class="a" style="left:1497px;top:203px;width:1px;height:20px;background:#bdbdbd;"></div>
<div class="a" style="left:1566px;top:203px;width:1px;height:20px;background:#bdbdbd;"></div>
<div class="a" style="left:25px;top:223px;width:1px;height:626px;background:#ababab;"></div>
<svg class="a" style="left:10px;top:208px;" width="13" height="13" viewBox="0 0 13 13"><path d="M12 0v12H0z" fill="#b8b8b8"/></svg>
<span class="t" style="top:202.5px;height:19px;line-height:19px;font-size:13px;color:#262626;left:-133px;width:400px;text-align:center;">A</span>
<span class="t" style="top:202.5px;height:19px;line-height:19px;font-size:13px;color:#262626;left:-50.5px;width:400px;text-align:center;">B</span>
<span class="t" style="top:202.5px;height:19px;line-height:19px;font-size:13px;color:#217346;left:216.5px;width:400px;text-align:center;">C</span>
<span class="t" style="top:202.5px;height:19px;line-height:19px;font-size:13px;color:#262626;left:708.5px;width:400px;text-align:center;">D</span>
<span class="t" style="top:202.5px;height:19px;line-height:19px;font-size:13px;color:#262626;left:1022px;width:400px;text-align:center;">E</span>
<span class="t" style="top:202.5px;height:19px;line-height:19px;font-size:13px;color:#262626;left:1122.5px;width:400px;text-align:center;">F</span>
<span class="t" style="top:202.5px;height:19px;line-height:19px;font-size:13px;color:#262626;left:1212px;width:400px;text-align:center;">G</span>
<span class="t" style="top:202.5px;height:19px;line-height:19px;font-size:13px;color:#262626;left:1273px;width:400px;text-align:center;">H</span>
<span class="t" style="top:202.5px;height:19px;line-height:19px;font-size:13px;color:#262626;left:1332px;width:400px;text-align:center;">I</span>
<div class="a" style="left:190px;top:221px;width:453px;height:2px;background:#217346;"></div>
<div class="a" style="left:26px;top:242px;width:1552px;height:1px;background:#d4d4d4;"></div>
<div class="a" style="left:26px;top:262px;width:1552px;height:1px;background:#d4d4d4;"></div>
<div class="a" style="left:26px;top:282px;width:1552px;height:1px;background:#d4d4d4;"></div>
<div class="a" style="left:26px;top:302px;width:1552px;height:1px;background:#d4d4d4;"></div>
<div class="a" style="left:26px;top:322px;width:1552px;height:1px;background:#d4d4d4;"></div>
<div class="a" style="left:26px;top:342px;width:1552px;height:1px;background:#d4d4d4;"></div>
<div class="a" style="left:26px;top:362px;width:1552px;height:1px;background:#d4d4d4;"></div>
<div class="a" style="left:26px;top:382px;width:1552px;height:1px;background:#d4d4d4;"></div>
<div class="a" style="left:26px;top:402px;width:1552px;height:1px;background:#d4d4d4;"></div>
<div class="a" style="left:26px;top:422px;width:1552px;height:1px;background:#d4d4d4;"></div>
<div class="a" style="left:26px;top:442px;width:1552px;height:1px;background:#d4d4d4;"></div>
<div class="a" style="left:26px;top:462px;width:1552px;height:1px;background:#d4d4d4;"></div>
<div class="a" style="left:26px;top:482px;width:1552px;height:1px;background:#d4d4d4;"></div>
<div class="a" style="left:26px;top:502px;width:1552px;height:1px;background:#d4d4d4;"></div>
<div class="a" style="left:26px;top:522px;width:1552px;height:1px;background:#d4d4d4;"></div>
<div class="a" style="left:26px;top:542px;width:1552px;height:1px;background:#d4d4d4;"></div>
<div class="a" style="left:26px;top:562px;width:1552px;height:1px;background:#d4d4d4;"></div>
<div class="a" style="left:26px;top:582px;width:1552px;height:1px;background:#d4d4d4;"></div>
<div class="a" style="left:26px;top:602px;width:1552px;height:1px;background:#d4d4d4;"></div>
<div class="a" style="left:26px;top:622px;width:1552px;height:1px;background:#d4d4d4;"></div>
<div class="a" style="left:26px;top:642px;width:1552px;height:1px;background:#d4d4d4;"></div>
<div class="a" style="left:26px;top:662px;width:1552px;height:1px;background:#d4d4d4;"></div>
<div class="a" style="left:26px;top:682px;width:1552px;height:1px;background:#d4d4d4;"></div>
<div class="a" style="left:26px;top:702px;width:1552px;height:1px;background:#d4d4d4;"></div>
<div class="a" style="left:26px;top:722px;width:1552px;height:1px;background:#d4d4d4;"></div>
<div class="a" style="left:26px;top:742px;width:1552px;height:1px;background:#d4d4d4;"></div>
<div class="a" style="left:26px;top:762px;width:1552px;height:1px;background:#d4d4d4;"></div>
<div class="a" style="left:26px;top:782px;width:1552px;height:1px;background:#d4d4d4;"></div>
<div class="a" style="left:26px;top:802px;width:1552px;height:1px;background:#d4d4d4;"></div>
<div class="a" style="left:26px;top:822px;width:1552px;height:1px;background:#d4d4d4;"></div>
<div class="a" style="left:26px;top:842px;width:1552px;height:1px;background:#d4d4d4;"></div>
<div class="a" style="left:108px;top:223px;width:1px;height:626px;background:#d4d4d4;"></div>
<div class="a" style="left:190px;top:223px;width:1px;height:626px;background:#d4d4d4;"></div>
<div class="a" style="left:642px;top:223px;width:1px;height:626px;background:#d4d4d4;"></div>
<div class="a" style="left:1174px;top:223px;width:1px;height:626px;background:#d4d4d4;"></div>
<div class="a" style="left:1269px;top:223px;width:1px;height:626px;background:#d4d4d4;"></div>
<div class="a" style="left:1375px;top:223px;width:1px;height:626px;background:#d4d4d4;"></div>
<div class="a" style="left:1448px;top:223px;width:1px;height:626px;background:#d4d4d4;"></div>
<div class="a" style="left:1497px;top:223px;width:1px;height:626px;background:#d4d4d4;"></div>
<div class="a" style="left:1566px;top:223px;width:1px;height:626px;background:#d4d4d4;"></div>
<div class="a" style="left:1578px;top:223px;width:1px;height:626px;background:#9a9a9a;"></div>
<div class="a" style="left:1579px;top:203px;width:21px;height:645px;background:#e6e6e6;"></div>
<span class="t" style="top:224px;height:19px;line-height:19px;font-size:13px;color:#262626;left:-187.5px;width:400px;text-align:center;">1</span>
<span class="t" style="top:244px;height:19px;line-height:19px;font-size:13px;color:#217346;left:-187.5px;width:400px;text-align:center;">2</span>
<div class="a" style="left:0px;top:242px;width:25px;height:1px;background:#c0c0c0;"></div>
<span class="t" style="top:264px;height:19px;line-height:19px;font-size:13px;color:#262626;left:-187.5px;width:400px;text-align:center;">3</span>
<div class="a" style="left:0px;top:262px;width:25px;height:1px;background:#c0c0c0;"></div>
<span class="t" style="top:284px;height:19px;line-height:19px;font-size:13px;color:#262626;left:-187.5px;width:400px;text-align:center;">4</span>
<div class="a" style="left:0px;top:282px;width:25px;height:1px;background:#c0c0c0;"></div>
<span class="t" style="top:304px;height:19px;line-height:19px;font-size:13px;color:#262626;left:-187.5px;width:400px;text-align:center;">5</span>
<div class="a" style="left:0px;top:302px;width:25px;height:1px;background:#c0c0c0;"></div>
<span class="t" style="top:324px;height:19px;line-height:19px;font-size:13px;color:#262626;left:-187.5px;width:400px;text-align:center;">6</span>
<div class="a" style="left:0px;top:322px;width:25px;height:1px;background:#c0c0c0;"></div>
<span class="t" style="top:344px;height:19px;line-height:19px;font-size:13px;color:#262626;left:-187.5px;width:400px;text-align:center;">7</span>
<div class="a" style="left:0px;top:342px;width:25px;height:1px;background:#c0c0c0;"></div>
<span class="t" style="top:364px;height:19px;line-height:19px;font-size:13px;color:#262626;left:-187.5px;width:400px;text-align:center;">8</span>
<div class="a" style="left:0px;top:362px;width:25px;height:1px;background:#c0c0c0;"></div>
<span class="t" style="top:384px;height:19px;line-height:19px;font-size:13px;color:#262626;left:-187.5px;width:400px;text-align:center;">9</span>
<div class="a" style="left:0px;top:382px;width:25px;height:1px;background:#c0c0c0;"></div>
<span class="t" style="top:404px;height:19px;line-height:19px;font-size:13px;color:#262626;left:-187.5px;width:400px;text-align:center;">10</span>
<div class="a" style="left:0px;top:402px;width:25px;height:1px;background:#c0c0c0;"></div>
<span class="t" style="top:424px;height:19px;line-height:19px;font-size:13px;color:#262626;left:-187.5px;width:400px;text-align:center;">11</span>
<div class="a" style="left:0px;top:422px;width:25px;height:1px;background:#c0c0c0;"></div>
<span class="t" style="top:444px;height:19px;line-height:19px;font-size:13px;color:#262626;left:-187.5px;width:400px;text-align:center;">12</span>
<div class="a" style="left:0px;top:442px;width:25px;height:1px;background:#c0c0c0;"></div>
<span class="t" style="top:464px;height:19px;line-height:19px;font-size:13px;color:#262626;left:-187.5px;width:400px;text-align:center;">13</span>
<div class="a" style="left:0px;top:462px;width:25px;height:1px;background:#c0c0c0;"></div>
<span class="t" style="top:484px;height:19px;line-height:19px;font-size:13px;color:#262626;left:-187.5px;width:400px;text-align:center;">14</span>
<div class="a" style="left:0px;top:482px;width:25px;height:1px;background:#c0c0c0;"></div>
<span class="t" style="top:504px;height:19px;line-height:19px;font-size:13px;color:#262626;left:-187.5px;width:400px;text-align:center;">15</span>
<div class="a" style="left:0px;top:502px;width:25px;height:1px;background:#c0c0c0;"></div>
<span class="t" style="top:524px;height:19px;line-height:19px;font-size:13px;color:#262626;left:-187.5px;width:400px;text-align:center;">16</span>
<div class="a" style="left:0px;top:522px;width:25px;height:1px;background:#c0c0c0;"></div>
<span class="t" style="top:544px;height:19px;line-height:19px;font-size:13px;color:#262626;left:-187.5px;width:400px;text-align:center;">17</span>
<div class="a" style="left:0px;top:542px;width:25px;height:1px;background:#c0c0c0;"></div>
<span class="t" style="top:564px;height:19px;line-height:19px;font-size:13px;color:#262626;left:-187.5px;width:400px;text-align:center;">18</span>
<div class="a" style="left:0px;top:562px;width:25px;height:1px;background:#c0c0c0;"></div>
<span class="t" style="top:584px;height:19px;line-height:19px;font-size:13px;color:#262626;left:-187.5px;width:400px;text-align:center;">19</span>
<div class="a" style="left:0px;top:582px;width:25px;height:1px;background:#c0c0c0;"></div>
<span class="t" style="top:604px;height:19px;line-height:19px;font-size:13px;color:#262626;left:-187.5px;width:400px;text-align:center;">20</span>
<div class="a" style="left:0px;top:602px;width:25px;height:1px;background:#c0c0c0;"></div>
<span class="t" style="top:624px;height:19px;line-height:19px;font-size:13px;color:#262626;left:-187.5px;width:400px;text-align:center;">21</span>
<div class="a" style="left:0px;top:622px;width:25px;height:1px;background:#c0c0c0;"></div>
<span class="t" style="top:644px;height:19px;line-height:19px;font-size:13px;color:#262626;left:-187.5px;width:400px;text-align:center;">22</span>
<div class="a" style="left:0px;top:642px;width:25px;height:1px;background:#c0c0c0;"></div>
<span class="t" style="top:664px;height:19px;line-height:19px;font-size:13px;color:#262626;left:-187.5px;width:400px;text-align:center;">23</span>
<div class="a" style="left:0px;top:662px;width:25px;height:1px;background:#c0c0c0;"></div>
<span class="t" style="top:684px;height:19px;line-height:19px;font-size:13px;color:#262626;left:-187.5px;width:400px;text-align:center;">24</span>
<div class="a" style="left:0px;top:682px;width:25px;height:1px;background:#c0c0c0;"></div>
<span class="t" style="top:704px;height:19px;line-height:19px;font-size:13px;color:#262626;left:-187.5px;width:400px;text-align:center;">25</span>
<div class="a" style="left:0px;top:702px;width:25px;height:1px;background:#c0c0c0;"></div>
<span class="t" style="top:724px;height:19px;line-height:19px;font-size:13px;color:#262626;left:-187.5px;width:400px;text-align:center;">26</span>
<div class="a" style="left:0px;top:722px;width:25px;height:1px;background:#c0c0c0;"></div>
<span class="t" style="top:744px;height:19px;line-height:19px;font-size:13px;color:#262626;left:-187.5px;width:400px;text-align:center;">27</span>
<div class="a" style="left:0px;top:742px;width:25px;height:1px;background:#c0c0c0;"></div>
<span class="t" style="top:764px;height:19px;line-height:19px;font-size:13px;color:#262626;left:-187.5px;width:400px;text-align:center;">28</span>
<div class="a" style="left:0px;top:762px;width:25px;height:1px;background:#c0c0c0;"></div>
<span class="t" style="top:784px;height:19px;line-height:19px;font-size:13px;color:#262626;left:-187.5px;width:400px;text-align:center;">29</span>
<div class="a" style="left:0px;top:782px;width:25px;height:1px;background:#c0c0c0;"></div>
<span class="t" style="top:804px;height:19px;line-height:19px;font-size:13px;color:#262626;left:-187.5px;width:400px;text-align:center;">30</span>
<div class="a" style="left:0px;top:802px;width:25px;height:1px;background:#c0c0c0;"></div>
<span class="t" style="top:824px;height:19px;line-height:19px;font-size:13px;color:#262626;left:-187.5px;width:400px;text-align:center;">31</span>
<div class="a" style="left:0px;top:822px;width:25px;height:1px;background:#c0c0c0;"></div>
<div class="a" style="left:0px;top:842px;width:25px;height:1px;background:#c0c0c0;"></div>
<div class="a" style="left:24px;top:243px;width:2px;height:19px;background:#217346;"></div>
<span class="t" style="top:224px;height:19px;line-height:19px;font-size:13px;color:#000;left:28px;letter-spacing:0.613px;">Item_Anexo</span>
<span class="t" style="top:224px;height:19px;line-height:19px;font-size:13px;color:#000;left:111px;letter-spacing:-0.175px;">IDNCM_NBS</span>
<span class="t" style="top:224px;height:19px;line-height:19px;font-size:13px;color:#000;left:193px;letter-spacing:0.249px;">DescricaoNCM</span>
<span class="t" style="top:224px;height:19px;line-height:19px;font-size:13px;color:#000;left:645px;letter-spacing:0.225px;">DescricaoAnexo</span>
<span class="t" style="top:224px;height:19px;line-height:19px;font-size:13px;color:#000;left:1177px;letter-spacing:0.092px;">Perc_Reducao</span>
<span class="t" style="top:224px;height:19px;line-height:19px;font-size:13px;color:#000;left:1272px;letter-spacing:0.598px;">Numero_Anexo</span>
<span class="t" style="top:224px;height:19px;line-height:19px;font-size:13px;color:#000;left:1378px;letter-spacing:0.34px;">IniUso</span>
<span class="t" style="top:224px;height:19px;line-height:19px;font-size:13px;color:#000;left:1451px;letter-spacing:0.152px;">FinUso</span>
<span class="t" style="top:224px;height:19px;line-height:19px;font-size:13px;color:#000;left:1500px;letter-spacing:-0.297px;">NCM_NBS</span>
<div class="a" style="left:0px;top:223px;width:1578px;height:626px;overflow:hidden;">
<span class="t" style="top:21px;height:19px;line-height:19px;font-size:13px;color:#000;left:28px;letter-spacing:-0.234px;">19</span>
<span class="t" style="top:21px;height:19px;line-height:19px;font-size:13px;color:#000;left:111px;letter-spacing:-0.109px;">02011000</span>
<div class="a" style="left:191px;top:20px;width:451px;height:19px;overflow:hidden;">
<span class="t" style="top:1px;height:19px;line-height:19px;font-size:13px;color:#000;left:2px;letter-spacing:0.136px;">-- Carnes bovinas frescas ou refrigeradas: em carcaças e meias-carcaças</span>
</div>
<div class="a" style="left:643px;top:20px;width:531px;height:19px;overflow:hidden;">
<span class="t" style="top:1px;height:19px;line-height:19px;font-size:13px;color:#000;left:2px;letter-spacing:0.29px;">Carnes bovina, suína, ovina, caprina e de aves e produtos de origem animal (exceto foie gras)</span>
</div>
<span class="t" style="top:21px;height:19px;line-height:19px;font-size:13px;color:#000;left:867px;width:400px;text-align:right;">1</span>
<span class="t" style="top:21px;height:19px;line-height:19px;font-size:13px;color:#000;left:1122px;width:400px;text-align:center;">I</span>
<span class="t" style="top:21px;height:19px;line-height:19px;font-size:13px;color:#000;left:1378px;letter-spacing:-0.05px;">2024-08-01</span>
<span class="t" style="top:21px;height:19px;line-height:19px;font-size:13px;color:#000;left:1500px;letter-spacing:0.13px;">NCM</span>
<svg class="a" style="left:26px;top:20px" width="7" height="7"><path d="M0 0h6L0 6z" fill="#008000"/></svg>
<svg class="a" style="left:109px;top:20px" width="7" height="7"><path d="M0 0h6L0 6z" fill="#008000"/></svg>
<span class="t" style="top:41px;height:19px;line-height:19px;font-size:13px;color:#000;left:28px;letter-spacing:-0.234px;">19</span>
<span class="t" style="top:41px;height:19px;line-height:19px;font-size:13px;color:#000;left:111px;letter-spacing:-0.23px;">02012010</span>
<div class="a" style="left:191px;top:40px;width:451px;height:19px;overflow:hidden;">
<span class="t" style="top:1px;height:19px;line-height:19px;font-size:13px;color:#000;left:2px;letter-spacing:0.291px;">-- Carnes bovinas frescas ou refrigeradas: quartos dianteiros não separados</span>
</div>
<div class="a" style="left:643px;top:40px;width:531px;height:19px;overflow:hidden;">
<span class="t" style="top:1px;height:19px;line-height:19px;font-size:13px;color:#000;left:2px;letter-spacing:0.29px;">Carnes bovina, suína, ovina, caprina e de aves e produtos de origem animal (exceto foie gras)</span>
</div>
<span class="t" style="top:41px;height:19px;line-height:19px;font-size:13px;color:#000;left:867px;width:400px;text-align:right;">1</span>
<span class="t" style="top:41px;height:19px;line-height:19px;font-size:13px;color:#000;left:1122px;width:400px;text-align:center;">I</span>
<span class="t" style="top:41px;height:19px;line-height:19px;font-size:13px;color:#000;left:1378px;letter-spacing:-0.05px;">2024-08-01</span>
<span class="t" style="top:41px;height:19px;line-height:19px;font-size:13px;color:#000;left:1500px;letter-spacing:0.13px;">NCM</span>
<svg class="a" style="left:26px;top:40px" width="7" height="7"><path d="M0 0h6L0 6z" fill="#008000"/></svg>
<svg class="a" style="left:109px;top:40px" width="7" height="7"><path d="M0 0h6L0 6z" fill="#008000"/></svg>
<span class="t" style="top:61px;height:19px;line-height:19px;font-size:13px;color:#000;left:28px;letter-spacing:-0.234px;">19</span>
<span class="t" style="top:61px;height:19px;line-height:19px;font-size:13px;color:#000;left:111px;letter-spacing:-0.23px;">02012020</span>
<div class="a" style="left:191px;top:60px;width:451px;height:19px;overflow:hidden;">
<span class="t" style="top:1px;height:19px;line-height:19px;font-size:13px;color:#000;left:2px;letter-spacing:0.273px;">-- Carnes bovinas frescas ou refrigeradas: quartos traseiros não separados</span>
</div>
<div class="a" style="left:643px;top:60px;width:531px;height:19px;overflow:hidden;">
<span class="t" style="top:1px;height:19px;line-height:19px;font-size:13px;color:#000;left:2px;letter-spacing:0.29px;">Carnes bovina, suína, ovina, caprina e de aves e produtos de origem animal (exceto foie gras)</span>
</div>
<span class="t" style="top:61px;height:19px;line-height:19px;font-size:13px;color:#000;left:867px;width:400px;text-align:right;">1</span>
<span class="t" style="top:61px;height:19px;line-height:19px;font-size:13px;color:#000;left:1122px;width:400px;text-align:center;">I</span>
<span class="t" style="top:61px;height:19px;line-height:19px;font-size:13px;color:#000;left:1378px;letter-spacing:-0.05px;">2024-08-01</span>
<span class="t" style="top:61px;height:19px;line-height:19px;font-size:13px;color:#000;left:1500px;letter-spacing:0.13px;">NCM</span>
<svg class="a" style="left:26px;top:60px" width="7" height="7"><path d="M0 0h6L0 6z" fill="#008000"/></svg>
<svg class="a" style="left:109px;top:60px" width="7" height="7"><path d="M0 0h6L0 6z" fill="#008000"/></svg>
<span class="t" style="top:81px;height:19px;line-height:19px;font-size:13px;color:#000;left:28px;letter-spacing:-0.234px;">19</span>
<span class="t" style="top:81px;height:19px;line-height:19px;font-size:13px;color:#000;left:111px;letter-spacing:-0.23px;">02013000</span>
<div class="a" style="left:191px;top:80px;width:451px;height:19px;overflow:hidden;">
<span class="t" style="top:1px;height:19px;line-height:19px;font-size:13px;color:#000;left:2px;letter-spacing:0.187px;">-- Carnes bovinas frescas ou refrigeradas: desossadas</span>
</div>
<div class="a" style="left:643px;top:80px;width:531px;height:19px;overflow:hidden;">
<span class="t" style="top:1px;height:19px;line-height:19px;font-size:13px;color:#000;left:2px;letter-spacing:0.29px;">Carnes bovina, suína, ovina, caprina e de aves e produtos de origem animal (exceto foie gras)</span>
</div>
<span class="t" style="top:81px;height:19px;line-height:19px;font-size:13px;color:#000;left:867px;width:400px;text-align:right;">1</span>
<span class="t" style="top:81px;height:19px;line-height:19px;font-size:13px;color:#000;left:1122px;width:400px;text-align:center;">I</span>
<span class="t" style="top:81px;height:19px;line-height:19px;font-size:13px;color:#000;left:1378px;letter-spacing:-0.05px;">2024-08-01</span>
<span class="t" style="top:81px;height:19px;line-height:19px;font-size:13px;color:#000;left:1500px;letter-spacing:0.13px;">NCM</span>
<svg class="a" style="left:26px;top:80px" width="7" height="7"><path d="M0 0h6L0 6z" fill="#008000"/></svg>
<svg class="a" style="left:109px;top:80px" width="7" height="7"><path d="M0 0h6L0 6z" fill="#008000"/></svg>
<span class="t" style="top:101px;height:19px;line-height:19px;font-size:13px;color:#000;left:28px;letter-spacing:-0.234px;">19</span>
<span class="t" style="top:101px;height:19px;line-height:19px;font-size:13px;color:#000;left:111px;letter-spacing:-0.23px;">02021000</span>
<div class="a" style="left:191px;top:100px;width:451px;height:19px;overflow:hidden;">
<span class="t" style="top:1px;height:19px;line-height:19px;font-size:13px;color:#000;left:2px;letter-spacing:0.102px;">-- Carnes bovinas congeladas: em carcaças e meias-carcaças</span>
</div>
<div class="a" style="left:643px;top:100px;width:531px;height:19px;overflow:hidden;">
<span class="t" style="top:1px;height:19px;line-height:19px;font-size:13px;color:#000;left:2px;letter-spacing:0.29px;">Carnes bovina, suína, ovina, caprina e de aves e produtos de origem animal (exceto foie gras)</span>
</div>
<span class="t" style="top:101px;height:19px;line-height:19px;font-size:13px;color:#000;left:867px;width:400px;text-align:right;">1</span>
<span class="t" style="top:101px;height:19px;line-height:19px;font-size:13px;color:#000;left:1122px;width:400px;text-align:center;">I</span>
<span class="t" style="top:101px;height:19px;line-height:19px;font-size:13px;color:#000;left:1378px;letter-spacing:-0.05px;">2024-08-01</span>
<span class="t" style="top:101px;height:19px;line-height:19px;font-size:13px;color:#000;left:1500px;letter-spacing:0.13px;">NCM</span>
<svg class="a" style="left:26px;top:100px" width="7" height="7"><path d="M0 0h6L0 6z" fill="#008000"/></svg>
<svg class="a" style="left:109px;top:100px" width="7" height="7"><path d="M0 0h6L0 6z" fill="#008000"/></svg>
<span class="t" style="top:121px;height:19px;line-height:19px;font-size:13px;color:#000;left:28px;letter-spacing:-0.234px;">19</span>
<span class="t" style="top:121px;height:19px;line-height:19px;font-size:13px;color:#000;left:111px;letter-spacing:-0.23px;">02022010</span>
<div class="a" style="left:191px;top:120px;width:451px;height:19px;overflow:hidden;">
<span class="t" style="top:1px;height:19px;line-height:19px;font-size:13px;color:#000;left:2px;letter-spacing:0.284px;">-- Carnes bovinas congeladas: quartos dianteiros não separados</span>
</div>
<div class="a" style="left:643px;top:120px;width:531px;height:19px;overflow:hidden;">
<span class="t" style="top:1px;height:19px;line-height:19px;font-size:13px;color:#000;left:2px;letter-spacing:0.29px;">Carnes bovina, suína, ovina, caprina e de aves e produtos de origem animal (exceto foie gras)</span>
</div>
<span class="t" style="top:121px;height:19px;line-height:19px;font-size:13px;color:#000;left:867px;width:400px;text-align:right;">1</span>
<span class="t" style="top:121px;height:19px;line-height:19px;font-size:13px;color:#000;left:1122px;width:400px;text-align:center;">I</span>
<span class="t" style="top:121px;height:19px;line-height:19px;font-size:13px;color:#000;left:1378px;letter-spacing:-0.05px;">2024-08-01</span>
<span class="t" style="top:121px;height:19px;line-height:19px;font-size:13px;color:#000;left:1500px;letter-spacing:0.13px;">NCM</span>
<svg class="a" style="left:26px;top:120px" width="7" height="7"><path d="M0 0h6L0 6z" fill="#008000"/></svg>
<svg class="a" style="left:109px;top:120px" width="7" height="7"><path d="M0 0h6L0 6z" fill="#008000"/></svg>
<span class="t" style="top:141px;height:19px;line-height:19px;font-size:13px;color:#000;left:28px;letter-spacing:-0.234px;">19</span>
<span class="t" style="top:141px;height:19px;line-height:19px;font-size:13px;color:#000;left:111px;letter-spacing:-0.23px;">02022020</span>
<div class="a" style="left:191px;top:140px;width:451px;height:19px;overflow:hidden;">
<span class="t" style="top:1px;height:19px;line-height:19px;font-size:13px;color:#000;left:2px;letter-spacing:0.261px;">-- Carnes bovinas congeladas: quartos traseiros não separados</span>
</div>
<div class="a" style="left:643px;top:140px;width:531px;height:19px;overflow:hidden;">
<span class="t" style="top:1px;height:19px;line-height:19px;font-size:13px;color:#000;left:2px;letter-spacing:0.29px;">Carnes bovina, suína, ovina, caprina e de aves e produtos de origem animal (exceto foie gras)</span>
</div>
<span class="t" style="top:141px;height:19px;line-height:19px;font-size:13px;color:#000;left:867px;width:400px;text-align:right;">1</span>
<span class="t" style="top:141px;height:19px;line-height:19px;font-size:13px;color:#000;left:1122px;width:400px;text-align:center;">I</span>
<span class="t" style="top:141px;height:19px;line-height:19px;font-size:13px;color:#000;left:1378px;letter-spacing:-0.05px;">2024-08-01</span>
<span class="t" style="top:141px;height:19px;line-height:19px;font-size:13px;color:#000;left:1500px;letter-spacing:0.13px;">NCM</span>
<svg class="a" style="left:26px;top:140px" width="7" height="7"><path d="M0 0h6L0 6z" fill="#008000"/></svg>
<svg class="a" style="left:109px;top:140px" width="7" height="7"><path d="M0 0h6L0 6z" fill="#008000"/></svg>
<span class="t" style="top:161px;height:19px;line-height:19px;font-size:13px;color:#000;left:28px;letter-spacing:-0.234px;">19</span>
<span class="t" style="top:161px;height:19px;line-height:19px;font-size:13px;color:#000;left:111px;letter-spacing:-0.23px;">02023000</span>
<div class="a" style="left:191px;top:160px;width:451px;height:19px;overflow:hidden;">
<span class="t" style="top:1px;height:19px;line-height:19px;font-size:13px;color:#000;left:2px;letter-spacing:0.145px;">-- Carnes bovinas congeladas: desossadas</span>
</div>
<div class="a" style="left:643px;top:160px;width:531px;height:19px;overflow:hidden;">
<span class="t" style="top:1px;height:19px;line-height:19px;font-size:13px;color:#000;left:2px;letter-spacing:0.29px;">Carnes bovina, suína, ovina, caprina e de aves e produtos de origem animal (exceto foie gras)</span>
</div>
<span class="t" style="top:161px;height:19px;line-height:19px;font-size:13px;color:#000;left:867px;width:400px;text-align:right;">1</span>
<span class="t" style="top:161px;height:19px;line-height:19px;font-size:13px;color:#000;left:1122px;width:400px;text-align:center;">I</span>
<span class="t" style="top:161px;height:19px;line-height:19px;font-size:13px;color:#000;left:1378px;letter-spacing:-0.05px;">2024-08-01</span>
<span class="t" style="top:161px;height:19px;line-height:19px;font-size:13px;color:#000;left:1500px;letter-spacing:0.13px;">NCM</span>
<svg class="a" style="left:26px;top:160px" width="7" height="7"><path d="M0 0h6L0 6z" fill="#008000"/></svg>
<svg class="a" style="left:109px;top:160px" width="7" height="7"><path d="M0 0h6L0 6z" fill="#008000"/></svg>
<span class="t" style="top:181px;height:19px;line-height:19px;font-size:13px;color:#000;left:28px;letter-spacing:-0.234px;">19</span>
<span class="t" style="top:181px;height:19px;line-height:19px;font-size:13px;color:#000;left:111px;letter-spacing:-0.109px;">02031100</span>
<div class="a" style="left:191px;top:180px;width:451px;height:19px;overflow:hidden;">
<span class="t" style="top:1px;height:19px;line-height:19px;font-size:13px;color:#000;left:2px;letter-spacing:0.105px;">-- Carnes suínas frescas ou refrigeradas: em carcaças e meias-carcaças</span>
</div>
<div class="a" style="left:643px;top:180px;width:531px;height:19px;overflow:hidden;">
<span class="t" style="top:1px;height:19px;line-height:19px;font-size:13px;color:#000;left:2px;letter-spacing:0.29px;">Carnes bovina, suína, ovina, caprina e de aves e produtos de origem animal (exceto foie gras)</span>
</div>
<span class="t" style="top:181px;height:19px;line-height:19px;font-size:13px;color:#000;left:867px;width:400px;text-align:right;">1</span>
<span class="t" style="top:181px;height:19px;line-height:19px;font-size:13px;color:#000;left:1122px;width:400px;text-align:center;">I</span>
<span class="t" style="top:181px;height:19px;line-height:19px;font-size:13px;color:#000;left:1378px;letter-spacing:-0.05px;">2024-08-01</span>
<span class="t" style="top:181px;height:19px;line-height:19px;font-size:13px;color:#000;left:1500px;letter-spacing:0.13px;">NCM</span>
<svg class="a" style="left:26px;top:180px" width="7" height="7"><path d="M0 0h6L0 6z" fill="#008000"/></svg>
<svg class="a" style="left:109px;top:180px" width="7" height="7"><path d="M0 0h6L0 6z" fill="#008000"/></svg>
<span class="t" style="top:201px;height:19px;line-height:19px;font-size:13px;color:#000;left:28px;letter-spacing:-0.234px;">19</span>
<span class="t" style="top:201px;height:19px;line-height:19px;font-size:13px;color:#000;left:111px;letter-spacing:-0.23px;">02031200</span>
<div class="a" style="left:191px;top:200px;width:451px;height:19px;overflow:hidden;">
<span class="t" style="top:1px;height:19px;line-height:19px;font-size:13px;color:#000;left:2px;letter-spacing:0.245px;">-- Carnes suínas frescas ou refrigeradas: pernis, ombros e respectivas partes, com osso</span>
</div>
<div class="a" style="left:643px;top:200px;width:531px;height:19px;overflow:hidden;">
<span class="t" style="top:1px;height:19px;line-height:19px;font-size:13px;color:#000;left:2px;letter-spacing:0.29px;">Carnes bovina, suína, ovina, caprina e de aves e produtos de origem animal (exceto foie gras)</span>
</div>
<span class="t" style="top:201px;height:19px;line-height:19px;font-size:13px;color:#000;left:867px;width:400px;text-align:right;">1</span>
<span class="t" style="top:201px;height:19px;line-height:19px;font-size:13px;color:#000;left:1122px;width:400px;text-align:center;">I</span>
<span class="t" style="top:201px;height:19px;line-height:19px;font-size:13px;color:#000;left:1378px;letter-spacing:-0.05px;">2024-08-01</span>
<span class="t" style="top:201px;height:19px;line-height:19px;font-size:13px;color:#000;left:1500px;letter-spacing:0.13px;">NCM</span>
<svg class="a" style="left:26px;top:200px" width="7" height="7"><path d="M0 0h6L0 6z" fill="#008000"/></svg>
<svg class="a" style="left:109px;top:200px" width="7" height="7"><path d="M0 0h6L0 6z" fill="#008000"/></svg>
<span class="t" style="top:221px;height:19px;line-height:19px;font-size:13px;color:#000;left:28px;letter-spacing:-0.234px;">19</span>
<span class="t" style="top:221px;height:19px;line-height:19px;font-size:13px;color:#000;left:111px;letter-spacing:-0.23px;">02031900</span>
<div class="a" style="left:191px;top:220px;width:451px;height:19px;overflow:hidden;">
<span class="t" style="top:1px;height:19px;line-height:19px;font-size:13px;color:#000;left:2px;letter-spacing:0.214px;">-- Carnes suínas frescas ou refrigeradas: outras</span>
</div>
<div class="a" style="left:643px;top:220px;width:531px;height:19px;overflow:hidden;">
<span class="t" style="top:1px;height:19px;line-height:19px;font-size:13px;color:#000;left:2px;letter-spacing:0.29px;">Carnes bovina, suína, ovina, caprina e de aves e produtos de origem animal (exceto foie gras)</span>
</div>
<span class="t" style="top:221px;height:19px;line-height:19px;font-size:13px;color:#000;left:867px;width:400px;text-align:right;">1</span>
<span class="t" style="top:221px;height:19px;line-height:19px;font-size:13px;color:#000;left:1122px;width:400px;text-align:center;">I</span>
<span class="t" style="top:221px;height:19px;line-height:19px;font-size:13px;color:#000;left:1378px;letter-spacing:-0.05px;">2024-08-01</span>
<span class="t" style="top:221px;height:19px;line-height:19px;font-size:13px;color:#000;left:1500px;letter-spacing:0.13px;">NCM</span>
<svg class="a" style="left:26px;top:220px" width="7" height="7"><path d="M0 0h6L0 6z" fill="#008000"/></svg>
<svg class="a" style="left:109px;top:220px" width="7" height="7"><path d="M0 0h6L0 6z" fill="#008000"/></svg>
<span class="t" style="top:241px;height:19px;line-height:19px;font-size:13px;color:#000;left:28px;letter-spacing:-0.234px;">19</span>
<span class="t" style="top:241px;height:19px;line-height:19px;font-size:13px;color:#000;left:111px;letter-spacing:-0.23px;">02032100</span>
<div class="a" style="left:191px;top:240px;width:451px;height:19px;overflow:hidden;">
<span class="t" style="top:1px;height:19px;line-height:19px;font-size:13px;color:#000;left:2px;letter-spacing:0.063px;">-- Carnes suínas congeladas: em carcaças e meias-carcaças</span>
</div>
<div class="a" style="left:643px;top:240px;width:531px;height:19px;overflow:hidden;">
<span class="t" style="top:1px;height:19px;line-height:19px;font-size:13px;color:#000;left:2px;letter-spacing:0.29px;">Carnes bovina, suína, ovina, caprina e de aves e produtos de origem animal (exceto foie gras)</span>
</div>
<span class="t" style="top:241px;height:19px;line-height:19px;font-size:13px;color:#000;left:867px;width:400px;text-align:right;">1</span>
<span class="t" style="top:241px;height:19px;line-height:19px;font-size:13px;color:#000;left:1122px;width:400px;text-align:center;">I</span>
<span class="t" style="top:241px;height:19px;line-height:19px;font-size:13px;color:#000;left:1378px;letter-spacing:-0.05px;">2024-08-01</span>
<span class="t" style="top:241px;height:19px;line-height:19px;font-size:13px;color:#000;left:1500px;letter-spacing:0.13px;">NCM</span>
<svg class="a" style="left:26px;top:240px" width="7" height="7"><path d="M0 0h6L0 6z" fill="#008000"/></svg>
<svg class="a" style="left:109px;top:240px" width="7" height="7"><path d="M0 0h6L0 6z" fill="#008000"/></svg>
<span class="t" style="top:261px;height:19px;line-height:19px;font-size:13px;color:#000;left:28px;letter-spacing:-0.234px;">19</span>
<span class="t" style="top:261px;height:19px;line-height:19px;font-size:13px;color:#000;left:111px;letter-spacing:-0.23px;">02032200</span>
<div class="a" style="left:191px;top:260px;width:451px;height:19px;overflow:hidden;">
<span class="t" style="top:1px;height:19px;line-height:19px;font-size:13px;color:#000;left:2px;letter-spacing:0.232px;">-- Carnes suínas congeladas: pernis, ombros e respectivas partes, com osso</span>
</div>
<div class="a" style="left:643px;top:260px;width:531px;height:19px;overflow:hidden;">
<span class="t" style="top:1px;height:19px;line-height:19px;font-size:13px;color:#000;left:2px;letter-spacing:0.29px;">Carnes bovina, suína, ovina, caprina e de aves e produtos de origem animal (exceto foie gras)</span>
</div>
<span class="t" style="top:261px;height:19px;line-height:19px;font-size:13px;color:#000;left:867px;width:400px;text-align:right;">1</span>
<span class="t" style="top:261px;height:19px;line-height:19px;font-size:13px;color:#000;left:1122px;width:400px;text-align:center;">I</span>
<span class="t" style="top:261px;height:19px;line-height:19px;font-size:13px;color:#000;left:1378px;letter-spacing:-0.05px;">2024-08-01</span>
<span class="t" style="top:261px;height:19px;line-height:19px;font-size:13px;color:#000;left:1500px;letter-spacing:0.13px;">NCM</span>
<svg class="a" style="left:26px;top:260px" width="7" height="7"><path d="M0 0h6L0 6z" fill="#008000"/></svg>
<svg class="a" style="left:109px;top:260px" width="7" height="7"><path d="M0 0h6L0 6z" fill="#008000"/></svg>
<span class="t" style="top:281px;height:19px;line-height:19px;font-size:13px;color:#000;left:28px;letter-spacing:-0.234px;">19</span>
<span class="t" style="top:281px;height:19px;line-height:19px;font-size:13px;color:#000;left:111px;letter-spacing:-0.23px;">02032900</span>
<div class="a" style="left:191px;top:280px;width:451px;height:19px;overflow:hidden;">
<span class="t" style="top:1px;height:19px;line-height:19px;font-size:13px;color:#000;left:2px;letter-spacing:0.175px;">-- Carnes suínas congeladas: outras</span>
</div>
<div class="a" style="left:643px;top:280px;width:531px;height:19px;overflow:hidden;">
<span class="t" style="top:1px;height:19px;line-height:19px;font-size:13px;color:#000;left:2px;letter-spacing:0.29px;">Carnes bovina, suína, ovina, caprina e de aves e produtos de origem animal (exceto foie gras)</span>
</div>
<span class="t" style="top:281px;height:19px;line-height:19px;font-size:13px;color:#000;left:867px;width:400px;text-align:right;">1</span>
<span class="t" style="top:281px;height:19px;line-height:19px;font-size:13px;color:#000;left:1122px;width:400px;text-align:center;">I</span>
<span class="t" style="top:281px;height:19px;line-height:19px;font-size:13px;color:#000;left:1378px;letter-spacing:-0.05px;">2024-08-01</span>
<span class="t" style="top:281px;height:19px;line-height:19px;font-size:13px;color:#000;left:1500px;letter-spacing:0.13px;">NCM</span>
<svg class="a" style="left:26px;top:280px" width="7" height="7"><path d="M0 0h6L0 6z" fill="#008000"/></svg>
<svg class="a" style="left:109px;top:280px" width="7" height="7"><path d="M0 0h6L0 6z" fill="#008000"/></svg>
<span class="t" style="top:301px;height:19px;line-height:19px;font-size:13px;color:#000;left:28px;letter-spacing:-0.234px;">19</span>
<span class="t" style="top:301px;height:19px;line-height:19px;font-size:13px;color:#000;left:111px;letter-spacing:-0.23px;">02041000</span>
<div class="a" style="left:191px;top:300px;width:451px;height:19px;overflow:hidden;">
<span class="t" style="top:1px;height:19px;line-height:19px;font-size:13px;color:#000;left:2px;letter-spacing:0.15px;">-- Ovinas ou caprinas, em carcaças e meias-carcaças, frescas ou refrigeradas</span>
</div>
<div class="a" style="left:643px;top:300px;width:531px;height:19px;overflow:hidden;">
<span class="t" style="top:1px;height:19px;line-height:19px;font-size:13px;color:#000;left:2px;letter-spacing:0.29px;">Carnes bovina, suína, ovina, caprina e de aves e produtos de origem animal (exceto foie gras)</span>
</div>
<span class="t" style="top:301px;height:19px;line-height:19px;font-size:13px;color:#000;left:867px;width:400px;text-align:right;">1</span>
<span class="t" style="top:301px;height:19px;line-height:19px;font-size:13px;color:#000;left:1122px;width:400px;text-align:center;">I</span>
<span class="t" style="top:301px;height:19px;line-height:19px;font-size:13px;color:#000;left:1378px;letter-spacing:-0.05px;">2024-08-01</span>
<span class="t" style="top:301px;height:19px;line-height:19px;font-size:13px;color:#000;left:1500px;letter-spacing:0.13px;">NCM</span>
<svg class="a" style="left:26px;top:300px" width="7" height="7"><path d="M0 0h6L0 6z" fill="#008000"/></svg>
<svg class="a" style="left:109px;top:300px" width="7" height="7"><path d="M0 0h6L0 6z" fill="#008000"/></svg>
<span class="t" style="top:321px;height:19px;line-height:19px;font-size:13px;color:#000;left:28px;letter-spacing:-0.234px;">19</span>
<span class="t" style="top:321px;height:19px;line-height:19px;font-size:13px;color:#000;left:111px;letter-spacing:-0.23px;">02042100</span>
<div class="a" style="left:191px;top:320px;width:451px;height:19px;overflow:hidden;">
<span class="t" style="top:1px;height:19px;line-height:19px;font-size:13px;color:#000;left:2px;letter-spacing:0.121px;">-- Ovinas ou caprinas, em carcaças e meias-carcaças, congeladas</span>
</div>
<div class="a" style="left:643px;top:320px;width:531px;height:19px;overflow:hidden;">
<span class="t" style="top:1px;height:19px;line-height:19px;font-size:13px;color:#000;left:2px;letter-spacing:0.29px;">Carnes bovina, suína, ovina, caprina e de aves e produtos de origem animal (exceto foie gras)</span>
</div>
<span class="t" style="top:321px;height:19px;line-height:19px;font-size:13px;color:#000;left:867px;width:400px;text-align:right;">1</span>
<span class="t" style="top:321px;height:19px;line-height:19px;font-size:13px;color:#000;left:1122px;width:400px;text-align:center;">I</span>
<span class="t" style="top:321px;height:19px;line-height:19px;font-size:13px;color:#000;left:1378px;letter-spacing:-0.05px;">2024-08-01</span>
<span class="t" style="top:321px;height:19px;line-height:19px;font-size:13px;color:#000;left:1500px;letter-spacing:0.13px;">NCM</span>
<svg class="a" style="left:26px;top:320px" width="7" height="7"><path d="M0 0h6L0 6z" fill="#008000"/></svg>
<svg class="a" style="left:109px;top:320px" width="7" height="7"><path d="M0 0h6L0 6z" fill="#008000"/></svg>
<span class="t" style="top:341px;height:19px;line-height:19px;font-size:13px;color:#000;left:28px;letter-spacing:-0.234px;">19</span>
<span class="t" style="top:341px;height:19px;line-height:19px;font-size:13px;color:#000;left:111px;letter-spacing:-0.23px;">02042200</span>
<div class="a" style="left:191px;top:340px;width:451px;height:19px;overflow:hidden;">
<span class="t" style="top:1px;height:19px;line-height:19px;font-size:13px;color:#000;left:2px;letter-spacing:0.255px;">-- Outros pedaços com osso, congelados</span>
</div>
<div class="a" style="left:643px;top:340px;width:531px;height:19px;overflow:hidden;">
<span class="t" style="top:1px;height:19px;line-height:19px;font-size:13px;color:#000;left:2px;letter-spacing:0.29px;">Carnes bovina, suína, ovina, caprina e de aves e produtos de origem animal (exceto foie gras)</span>
</div>
<span class="t" style="top:341px;height:19px;line-height:19px;font-size:13px;color:#000;left:867px;width:400px;text-align:right;">1</span>
<span class="t" style="top:341px;height:19px;line-height:19px;font-size:13px;color:#000;left:1122px;width:400px;text-align:center;">I</span>
<span class="t" style="top:341px;height:19px;line-height:19px;font-size:13px;color:#000;left:1378px;letter-spacing:-0.05px;">2024-08-01</span>
<span class="t" style="top:341px;height:19px;line-height:19px;font-size:13px;color:#000;left:1500px;letter-spacing:0.13px;">NCM</span>
<svg class="a" style="left:26px;top:340px" width="7" height="7"><path d="M0 0h6L0 6z" fill="#008000"/></svg>
<svg class="a" style="left:109px;top:340px" width="7" height="7"><path d="M0 0h6L0 6z" fill="#008000"/></svg>
<span class="t" style="top:361px;height:19px;line-height:19px;font-size:13px;color:#000;left:28px;letter-spacing:-0.234px;">19</span>
<span class="t" style="top:361px;height:19px;line-height:19px;font-size:13px;color:#000;left:111px;letter-spacing:-0.23px;">02042300</span>
<div class="a" style="left:191px;top:360px;width:451px;height:19px;overflow:hidden;">
<span class="t" style="top:1px;height:19px;line-height:19px;font-size:13px;color:#000;left:2px;letter-spacing:0.091px;">-- Desossadas, congeladas</span>
</div>
<div class="a" style="left:643px;top:360px;width:531px;height:19px;overflow:hidden;">
<span class="t" style="top:1px;height:19px;line-height:19px;font-size:13px;color:#000;left:2px;letter-spacing:0.29px;">Carnes bovina, suína, ovina, caprina e de aves e produtos de origem animal (exceto foie gras)</span>
</div>
<span class="t" style="top:361px;height:19px;line-height:19px;font-size:13px;color:#000;left:867px;width:400px;text-align:right;">1</span>
<span class="t" style="top:361px;height:19px;line-height:19px;font-size:13px;color:#000;left:1122px;width:400px;text-align:center;">I</span>
<span class="t" style="top:361px;height:19px;line-height:19px;font-size:13px;color:#000;left:1378px;letter-spacing:-0.05px;">2024-08-01</span>
<span class="t" style="top:361px;height:19px;line-height:19px;font-size:13px;color:#000;left:1500px;letter-spacing:0.13px;">NCM</span>
<svg class="a" style="left:26px;top:360px" width="7" height="7"><path d="M0 0h6L0 6z" fill="#008000"/></svg>
<svg class="a" style="left:109px;top:360px" width="7" height="7"><path d="M0 0h6L0 6z" fill="#008000"/></svg>
<span class="t" style="top:381px;height:19px;line-height:19px;font-size:13px;color:#000;left:28px;letter-spacing:-0.234px;">19</span>
<span class="t" style="top:381px;height:19px;line-height:19px;font-size:13px;color:#000;left:111px;letter-spacing:-0.23px;">02043000</span>
<div class="a" style="left:191px;top:380px;width:451px;height:19px;overflow:hidden;">
<span class="t" style="top:1px;height:19px;line-height:19px;font-size:13px;color:#000;left:2px;letter-spacing:0.273px;">Ovinos ou caprinos, desossados, frescos ou refrigerados</span>
</div>
<div class="a" style="left:643px;top:380px;width:531px;height:19px;overflow:hidden;">
<span class="t" style="top:1px;height:19px;line-height:19px;font-size:13px;color:#000;left:2px;letter-spacing:0.29px;">Carnes bovina, suína, ovina, caprina e de aves e produtos de origem animal (exceto foie gras)</span>
</div>
<span class="t" style="top:381px;height:19px;line-height:19px;font-size:13px;color:#000;left:867px;width:400px;text-align:right;">1</span>
<span class="t" style="top:381px;height:19px;line-height:19px;font-size:13px;color:#000;left:1122px;width:400px;text-align:center;">I</span>
<span class="t" style="top:381px;height:19px;line-height:19px;font-size:13px;color:#000;left:1378px;letter-spacing:-0.05px;">2024-08-01</span>
<span class="t" style="top:381px;height:19px;line-height:19px;font-size:13px;color:#000;left:1500px;letter-spacing:0.13px;">NCM</span>
<svg class="a" style="left:26px;top:380px" width="7" height="7"><path d="M0 0h6L0 6z" fill="#008000"/></svg>
<svg class="a" style="left:109px;top:380px" width="7" height="7"><path d="M0 0h6L0 6z" fill="#008000"/></svg>
<span class="t" style="top:401px;height:19px;line-height:19px;font-size:13px;color:#000;left:28px;letter-spacing:-0.234px;">19</span>
<span class="t" style="top:401px;height:19px;line-height:19px;font-size:13px;color:#000;left:111px;letter-spacing:-0.23px;">02044100</span>
<div class="a" style="left:191px;top:400px;width:451px;height:19px;overflow:hidden;">
<span class="t" style="top:1px;height:19px;line-height:19px;font-size:13px;color:#000;left:2px;letter-spacing:0.106px;">Em carcaças e meias-carcaças, frescas ou refrigeradas</span>
</div>
<div class="a" style="left:643px;top:400px;width:531px;height:19px;overflow:hidden;">
<span class="t" style="top:1px;height:19px;line-height:19px;font-size:13px;color:#000;left:2px;letter-spacing:0.29px;">Carnes bovina, suína, ovina, caprina e de aves e produtos de origem animal (exceto foie gras)</span>
</div>
<span class="t" style="top:401px;height:19px;line-height:19px;font-size:13px;color:#000;left:867px;width:400px;text-align:right;">1</span>
<span class="t" style="top:401px;height:19px;line-height:19px;font-size:13px;color:#000;left:1122px;width:400px;text-align:center;">I</span>
<span class="t" style="top:401px;height:19px;line-height:19px;font-size:13px;color:#000;left:1378px;letter-spacing:-0.05px;">2024-08-01</span>
<span class="t" style="top:401px;height:19px;line-height:19px;font-size:13px;color:#000;left:1500px;letter-spacing:0.13px;">NCM</span>
<svg class="a" style="left:26px;top:400px" width="7" height="7"><path d="M0 0h6L0 6z" fill="#008000"/></svg>
<svg class="a" style="left:109px;top:400px" width="7" height="7"><path d="M0 0h6L0 6z" fill="#008000"/></svg>
<span class="t" style="top:421px;height:19px;line-height:19px;font-size:13px;color:#000;left:28px;letter-spacing:-0.234px;">19</span>
<span class="t" style="top:421px;height:19px;line-height:19px;font-size:13px;color:#000;left:111px;letter-spacing:-0.23px;">02044200</span>
<div class="a" style="left:191px;top:420px;width:451px;height:19px;overflow:hidden;">
<span class="t" style="top:1px;height:19px;line-height:19px;font-size:13px;color:#000;left:2px;letter-spacing:0.296px;">Outros pedaços com osso, frescos ou refrigerados</span>
</div>
<div class="a" style="left:643px;top:420px;width:531px;height:19px;overflow:hidden;">
<span class="t" style="top:1px;height:19px;line-height:19px;font-size:13px;color:#000;left:2px;letter-spacing:0.29px;">Carnes bovina, suína, ovina, caprina e de aves e produtos de origem animal (exceto foie gras)</span>
</div>
<span class="t" style="top:421px;height:19px;line-height:19px;font-size:13px;color:#000;left:867px;width:400px;text-align:right;">1</span>
<span class="t" style="top:421px;height:19px;line-height:19px;font-size:13px;color:#000;left:1122px;width:400px;text-align:center;">I</span>
<span class="t" style="top:421px;height:19px;line-height:19px;font-size:13px;color:#000;left:1378px;letter-spacing:-0.05px;">2024-08-01</span>
<span class="t" style="top:421px;height:19px;line-height:19px;font-size:13px;color:#000;left:1500px;letter-spacing:0.13px;">NCM</span>
<svg class="a" style="left:26px;top:420px" width="7" height="7"><path d="M0 0h6L0 6z" fill="#008000"/></svg>
<svg class="a" style="left:109px;top:420px" width="7" height="7"><path d="M0 0h6L0 6z" fill="#008000"/></svg>
<span class="t" style="top:441px;height:19px;line-height:19px;font-size:13px;color:#000;left:28px;letter-spacing:-0.234px;">19</span>
<span class="t" style="top:441px;height:19px;line-height:19px;font-size:13px;color:#000;left:111px;letter-spacing:-0.23px;">02044300</span>
<div class="a" style="left:191px;top:440px;width:451px;height:19px;overflow:hidden;">
<span class="t" style="top:1px;height:19px;line-height:19px;font-size:13px;color:#000;left:2px;letter-spacing:0.234px;">Desossados, frescos ou refrigerados</span>
</div>
<div class="a" style="left:643px;top:440px;width:531px;height:19px;overflow:hidden;">
<span class="t" style="top:1px;height:19px;line-height:19px;font-size:13px;color:#000;left:2px;letter-spacing:0.29px;">Carnes bovina, suína, ovina, caprina e de aves e produtos de origem animal (exceto foie gras)</span>
</div>
<span class="t" style="top:441px;height:19px;line-height:19px;font-size:13px;color:#000;left:867px;width:400px;text-align:right;">1</span>
<span class="t" style="top:441px;height:19px;line-height:19px;font-size:13px;color:#000;left:1122px;width:400px;text-align:center;">I</span>
<span class="t" style="top:441px;height:19px;line-height:19px;font-size:13px;color:#000;left:1378px;letter-spacing:-0.05px;">2024-08-01</span>
<span class="t" style="top:441px;height:19px;line-height:19px;font-size:13px;color:#000;left:1500px;letter-spacing:0.13px;">NCM</span>
<svg class="a" style="left:26px;top:440px" width="7" height="7"><path d="M0 0h6L0 6z" fill="#008000"/></svg>
<svg class="a" style="left:109px;top:440px" width="7" height="7"><path d="M0 0h6L0 6z" fill="#008000"/></svg>
<span class="t" style="top:461px;height:19px;line-height:19px;font-size:13px;color:#000;left:28px;letter-spacing:-0.234px;">19</span>
<span class="t" style="top:461px;height:19px;line-height:19px;font-size:13px;color:#000;left:111px;letter-spacing:-0.23px;">02061000</span>
<div class="a" style="left:191px;top:460px;width:451px;height:19px;overflow:hidden;">
<span class="t" style="top:1px;height:19px;line-height:19px;font-size:13px;color:#000;left:2px;letter-spacing:0.246px;">Bovinas, frescas ou refrigeradas</span>
</div>
<div class="a" style="left:643px;top:460px;width:531px;height:19px;overflow:hidden;">
<span class="t" style="top:1px;height:19px;line-height:19px;font-size:13px;color:#000;left:2px;letter-spacing:0.29px;">Carnes bovina, suína, ovina, caprina e de aves e produtos de origem animal (exceto foie gras)</span>
</div>
<span class="t" style="top:461px;height:19px;line-height:19px;font-size:13px;color:#000;left:867px;width:400px;text-align:right;">1</span>
<span class="t" style="top:461px;height:19px;line-height:19px;font-size:13px;color:#000;left:1122px;width:400px;text-align:center;">I</span>
<span class="t" style="top:461px;height:19px;line-height:19px;font-size:13px;color:#000;left:1378px;letter-spacing:-0.05px;">2024-08-01</span>
<span class="t" style="top:461px;height:19px;line-height:19px;font-size:13px;color:#000;left:1500px;letter-spacing:0.13px;">NCM</span>
<svg class="a" style="left:26px;top:460px" width="7" height="7"><path d="M0 0h6L0 6z" fill="#008000"/></svg>
<svg class="a" style="left:109px;top:460px" width="7" height="7"><path d="M0 0h6L0 6z" fill="#008000"/></svg>
<span class="t" style="top:481px;height:19px;line-height:19px;font-size:13px;color:#000;left:28px;letter-spacing:-0.234px;">19</span>
<span class="t" style="top:481px;height:19px;line-height:19px;font-size:13px;color:#000;left:111px;letter-spacing:-0.23px;">02062100</span>
<div class="a" style="left:191px;top:480px;width:451px;height:19px;overflow:hidden;">
<span class="t" style="top:1px;height:19px;line-height:19px;font-size:13px;color:#000;left:2px;letter-spacing:0.282px;">-- Comestíveis, bovinas, congeladas: miúdos de bovinos</span>
</div>
<div class="a" style="left:643px;top:480px;width:531px;height:19px;overflow:hidden;">
<span class="t" style="top:1px;height:19px;line-height:19px;font-size:13px;color:#000;left:2px;letter-spacing:0.29px;">Carnes bovina, suína, ovina, caprina e de aves e produtos de origem animal (exceto foie gras)</span>
</div>
<span class="t" style="top:481px;height:19px;line-height:19px;font-size:13px;color:#000;left:867px;width:400px;text-align:right;">1</span>
<span class="t" style="top:481px;height:19px;line-height:19px;font-size:13px;color:#000;left:1122px;width:400px;text-align:center;">I</span>
<span class="t" style="top:481px;height:19px;line-height:19px;font-size:13px;color:#000;left:1378px;letter-spacing:-0.05px;">2024-08-01</span>
<span class="t" style="top:481px;height:19px;line-height:19px;font-size:13px;color:#000;left:1500px;letter-spacing:0.13px;">NCM</span>
<svg class="a" style="left:26px;top:480px" width="7" height="7"><path d="M0 0h6L0 6z" fill="#008000"/></svg>
<svg class="a" style="left:109px;top:480px" width="7" height="7"><path d="M0 0h6L0 6z" fill="#008000"/></svg>
<span class="t" style="top:501px;height:19px;line-height:19px;font-size:13px;color:#000;left:28px;letter-spacing:-0.234px;">19</span>
<span class="t" style="top:501px;height:19px;line-height:19px;font-size:13px;color:#000;left:111px;letter-spacing:-0.23px;">02062200</span>
<div class="a" style="left:191px;top:500px;width:451px;height:19px;overflow:hidden;">
<span class="t" style="top:1px;height:19px;line-height:19px;font-size:13px;color:#000;left:2px;letter-spacing:0.259px;">-- Fígado de bovinos, congelado</span>
</div>
<div class="a" style="left:643px;top:500px;width:531px;height:19px;overflow:hidden;">
<span class="t" style="top:1px;height:19px;line-height:19px;font-size:13px;color:#000;left:2px;letter-spacing:0.29px;">Carnes bovina, suína, ovina, caprina e de aves e produtos de origem animal (exceto foie gras)</span>
</div>
<span class="t" style="top:501px;height:19px;line-height:19px;font-size:13px;color:#000;left:867px;width:400px;text-align:right;">1</span>
<span class="t" style="top:501px;height:19px;line-height:19px;font-size:13px;color:#000;left:1122px;width:400px;text-align:center;">I</span>
<span class="t" style="top:501px;height:19px;line-height:19px;font-size:13px;color:#000;left:1378px;letter-spacing:-0.05px;">2024-08-01</span>
<span class="t" style="top:501px;height:19px;line-height:19px;font-size:13px;color:#000;left:1500px;letter-spacing:0.13px;">NCM</span>
<svg class="a" style="left:26px;top:500px" width="7" height="7"><path d="M0 0h6L0 6z" fill="#008000"/></svg>
<svg class="a" style="left:109px;top:500px" width="7" height="7"><path d="M0 0h6L0 6z" fill="#008000"/></svg>
<span class="t" style="top:521px;height:19px;line-height:19px;font-size:13px;color:#000;left:28px;letter-spacing:-0.234px;">19</span>
<span class="t" style="top:521px;height:19px;line-height:19px;font-size:13px;color:#000;left:111px;letter-spacing:-0.23px;">02062900</span>
<div class="a" style="left:191px;top:520px;width:451px;height:19px;overflow:hidden;">
<span class="t" style="top:1px;height:19px;line-height:19px;font-size:13px;color:#000;left:2px;letter-spacing:0.389px;">-- Outros</span>
</div>
<div class="a" style="left:643px;top:520px;width:531px;height:19px;overflow:hidden;">
<span class="t" style="top:1px;height:19px;line-height:19px;font-size:13px;color:#000;left:2px;letter-spacing:0.29px;">Carnes bovina, suína, ovina, caprina e de aves e produtos de origem animal (exceto foie gras)</span>
</div>
<span class="t" style="top:521px;height:19px;line-height:19px;font-size:13px;color:#000;left:867px;width:400px;text-align:right;">1</span>
<span class="t" style="top:521px;height:19px;line-height:19px;font-size:13px;color:#000;left:1122px;width:400px;text-align:center;">I</span>
<span class="t" style="top:521px;height:19px;line-height:19px;font-size:13px;color:#000;left:1378px;letter-spacing:-0.05px;">2024-08-01</span>
<span class="t" style="top:521px;height:19px;line-height:19px;font-size:13px;color:#000;left:1500px;letter-spacing:0.13px;">NCM</span>
<svg class="a" style="left:26px;top:520px" width="7" height="7"><path d="M0 0h6L0 6z" fill="#008000"/></svg>
<svg class="a" style="left:109px;top:520px" width="7" height="7"><path d="M0 0h6L0 6z" fill="#008000"/></svg>
<span class="t" style="top:541px;height:19px;line-height:19px;font-size:13px;color:#000;left:28px;letter-spacing:-0.234px;">19</span>
<span class="t" style="top:541px;height:19px;line-height:19px;font-size:13px;color:#000;left:111px;letter-spacing:-0.23px;">02063000</span>
<div class="a" style="left:191px;top:540px;width:451px;height:19px;overflow:hidden;">
<span class="t" style="top:1px;height:19px;line-height:19px;font-size:13px;color:#000;left:2px;letter-spacing:0.179px;">Suínas, frescas ou refrigeradas</span>
</div>
<div class="a" style="left:643px;top:540px;width:531px;height:19px;overflow:hidden;">
<span class="t" style="top:1px;height:19px;line-height:19px;font-size:13px;color:#000;left:2px;letter-spacing:0.29px;">Carnes bovina, suína, ovina, caprina e de aves e produtos de origem animal (exceto foie gras)</span>
</div>
<span class="t" style="top:541px;height:19px;line-height:19px;font-size:13px;color:#000;left:867px;width:400px;text-align:right;">1</span>
<span class="t" style="top:541px;height:19px;line-height:19px;font-size:13px;color:#000;left:1122px;width:400px;text-align:center;">I</span>
<span class="t" style="top:541px;height:19px;line-height:19px;font-size:13px;color:#000;left:1378px;letter-spacing:-0.05px;">2024-08-01</span>
<span class="t" style="top:541px;height:19px;line-height:19px;font-size:13px;color:#000;left:1500px;letter-spacing:0.13px;">NCM</span>
<svg class="a" style="left:26px;top:540px" width="7" height="7"><path d="M0 0h6L0 6z" fill="#008000"/></svg>
<svg class="a" style="left:109px;top:540px" width="7" height="7"><path d="M0 0h6L0 6z" fill="#008000"/></svg>
<span class="t" style="top:561px;height:19px;line-height:19px;font-size:13px;color:#000;left:28px;letter-spacing:-0.234px;">19</span>
<span class="t" style="top:561px;height:19px;line-height:19px;font-size:13px;color:#000;left:111px;letter-spacing:-0.23px;">02064100</span>
<div class="a" style="left:191px;top:560px;width:451px;height:19px;overflow:hidden;">
<span class="t" style="top:1px;height:19px;line-height:19px;font-size:13px;color:#000;left:2px;letter-spacing:0.149px;">-- Congeladas: fígados</span>
</div>
<div class="a" style="left:643px;top:560px;width:531px;height:19px;overflow:hidden;">
<span class="t" style="top:1px;height:19px;line-height:19px;font-size:13px;color:#000;left:2px;letter-spacing:0.29px;">Carnes bovina, suína, ovina, caprina e de aves e produtos de origem animal (exceto foie gras)</span>
</div>
<span class="t" style="top:561px;height:19px;line-height:19px;font-size:13px;color:#000;left:867px;width:400px;text-align:right;">1</span>
<span class="t" style="top:561px;height:19px;line-height:19px;font-size:13px;color:#000;left:1122px;width:400px;text-align:center;">I</span>
<span class="t" style="top:561px;height:19px;line-height:19px;font-size:13px;color:#000;left:1378px;letter-spacing:-0.05px;">2024-08-01</span>
<span class="t" style="top:561px;height:19px;line-height:19px;font-size:13px;color:#000;left:1500px;letter-spacing:0.13px;">NCM</span>
<svg class="a" style="left:26px;top:560px" width="7" height="7"><path d="M0 0h6L0 6z" fill="#008000"/></svg>
<svg class="a" style="left:109px;top:560px" width="7" height="7"><path d="M0 0h6L0 6z" fill="#008000"/></svg>
<span class="t" style="top:581px;height:19px;line-height:19px;font-size:13px;color:#000;left:28px;letter-spacing:-0.234px;">19</span>
<span class="t" style="top:581px;height:19px;line-height:19px;font-size:13px;color:#000;left:111px;letter-spacing:-0.23px;">02064900</span>
<div class="a" style="left:191px;top:580px;width:451px;height:19px;overflow:hidden;">
<span class="t" style="top:1px;height:19px;line-height:19px;font-size:13px;color:#000;left:2px;letter-spacing:0.275px;">-- Congeladas: outros</span>
</div>
<div class="a" style="left:643px;top:580px;width:531px;height:19px;overflow:hidden;">
<span class="t" style="top:1px;height:19px;line-height:19px;font-size:13px;color:#000;left:2px;letter-spacing:0.29px;">Carnes bovina, suína, ovina, caprina e de aves e produtos de origem animal (exceto foie gras)</span>
</div>
<span class="t" style="top:581px;height:19px;line-height:19px;font-size:13px;color:#000;left:867px;width:400px;text-align:right;">1</span>
<span class="t" style="top:581px;height:19px;line-height:19px;font-size:13px;color:#000;left:1122px;width:400px;text-align:center;">I</span>
<span class="t" style="top:581px;height:19px;line-height:19px;font-size:13px;color:#000;left:1378px;letter-spacing:-0.05px;">2024-08-01</span>
<span class="t" style="top:581px;height:19px;line-height:19px;font-size:13px;color:#000;left:1500px;letter-spacing:0.13px;">NCM</span>
<svg class="a" style="left:26px;top:580px" width="7" height="7"><path d="M0 0h6L0 6z" fill="#008000"/></svg>
<svg class="a" style="left:109px;top:580px" width="7" height="7"><path d="M0 0h6L0 6z" fill="#008000"/></svg>
<span class="t" style="top:601px;height:19px;line-height:19px;font-size:13px;color:#000;left:28px;letter-spacing:-0.234px;">19</span>
<span class="t" style="top:601px;height:19px;line-height:19px;font-size:13px;color:#000;left:111px;letter-spacing:-0.23px;">02068000</span>
<div class="a" style="left:191px;top:600px;width:451px;height:19px;overflow:hidden;">
<span class="t" style="top:1px;height:19px;line-height:19px;font-size:13px;color:#000;left:2px;letter-spacing:0.28px;">-- Miudezas comestíveis de ovinos e caprinos, frescas ou refrigeradas</span>
</div>
<div class="a" style="left:643px;top:600px;width:531px;height:19px;overflow:hidden;">
<span class="t" style="top:1px;height:19px;line-height:19px;font-size:13px;color:#000;left:2px;letter-spacing:0.19px;">Carne caprina classificada no código 0210.99.90 e miudezas comestíveis de ovinos e caprinos</span>
</div>
<span class="t" style="top:601px;height:19px;line-height:19px;font-size:13px;color:#000;left:867px;width:400px;text-align:right;">1</span>
<span class="t" style="top:601px;height:19px;line-height:19px;font-size:13px;color:#000;left:1122px;width:400px;text-align:center;">I</span>
<span class="t" style="top:601px;height:19px;line-height:19px;font-size:13px;color:#000;left:1378px;letter-spacing:-0.05px;">2024-08-01</span>
<span class="t" style="top:601px;height:19px;line-height:19px;font-size:13px;color:#000;left:1500px;letter-spacing:0.13px;">NCM</span>
<svg class="a" style="left:26px;top:600px" width="7" height="7"><path d="M0 0h6L0 6z" fill="#008000"/></svg>
<svg class="a" style="left:109px;top:600px" width="7" height="7"><path d="M0 0h6L0 6z" fill="#008000"/></svg>
<span class="t" style="top:621px;height:19px;line-height:19px;font-size:13px;color:#000;left:28px;letter-spacing:-0.234px;">19</span>
<span class="t" style="top:621px;height:19px;line-height:19px;font-size:13px;color:#000;left:111px;letter-spacing:-0.23px;">02069000</span>
<div class="a" style="left:191px;top:620px;width:451px;height:19px;overflow:hidden;">
<span class="t" style="top:1px;height:19px;line-height:19px;font-size:13px;color:#000;left:2px;letter-spacing:0.269px;">-- Miudezas comestíveis de ovinos e caprinos, congeladas</span>
</div>
<div class="a" style="left:643px;top:620px;width:531px;height:19px;overflow:hidden;">
<span class="t" style="top:1px;height:19px;line-height:19px;font-size:13px;color:#000;left:2px;letter-spacing:0.19px;">Carne caprina classificada no código 0210.99.90 e miudezas comestíveis de ovinos e caprinos</span>
</div>
<span class="t" style="top:621px;height:19px;line-height:19px;font-size:13px;color:#000;left:867px;width:400px;text-align:right;">1</span>
<span class="t" style="top:621px;height:19px;line-height:19px;font-size:13px;color:#000;left:1122px;width:400px;text-align:center;">I</span>
<span class="t" style="top:621px;height:19px;line-height:19px;font-size:13px;color:#000;left:1378px;letter-spacing:-0.05px;">2024-08-01</span>
<span class="t" style="top:621px;height:19px;line-height:19px;font-size:13px;color:#000;left:1500px;letter-spacing:0.13px;">NCM</span>
<svg class="a" style="left:26px;top:620px" width="7" height="7"><path d="M0 0h6L0 6z" fill="#008000"/></svg>
<svg class="a" style="left:109px;top:620px" width="7" height="7"><path d="M0 0h6L0 6z" fill="#008000"/></svg>
</div>
<div class="a" style="left:189px;top:241px;width:455px;height:23px;border:2px solid #217346;"></div>
<div class="a" style="left:639px;top:259px;width:6px;height:6px;background:#fff;"></div>
<div class="a" style="left:640px;top:260px;width:5px;height:5px;background:#217346;"></div>
<div class="a" style="left:1582px;top:220px;width:15px;height:615px;background:#f0f0f0;"></div>
<div class="a" style="left:1582px;top:205px;width:15px;height:15px;background:#fff;border:1px solid #999;"></div>
<svg class="a" style="left:1585.5px;top:210px;" width="8" height="5" viewBox="0 0 8 5"><path d="M0 4.5h8L4 0z" fill="#333"/></svg>
<div class="a" style="left:1582px;top:220px;width:15px;height:17px;background:#fff;border:1px solid #999;"></div>
<div class="a" style="left:1582px;top:835px;width:15px;height:15px;background:#fff;border:1px solid #999;"></div>
<svg class="a" style="left:1585.5px;top:840px;" width="8" height="5" viewBox="0 0 8 5"><path d="M0 0h8L4 4.5z" fill="#333"/></svg>
<div class="a" style="left:0px;top:849px;width:1579px;height:1px;background:#9a9a9a;"></div>
<div class="a" style="left:100px;top:849px;width:81px;height:25px;background:#fff;"></div>
<div class="a" style="left:100px;top:849px;width:1px;height:23px;background:#ababab;"></div>
<div class="a" style="left:180px;top:849px;width:1px;height:23px;background:#ababab;"></div>
<div class="a" style="left:100px;top:872px;width:81px;height:2px;background:#217346;"></div>
<span class="t" style="top:852.5px;height:20px;line-height:20px;font-size:14px;color:#217346;left:112px;font-weight:bold;letter-spacing:-0.608px;">Planilha1</span>
<svg class="a" style="left:26px;top:858px;" width="6" height="9" viewBox="0 0 6 9"><path d="M5 0.5v8L0.5 4.5z" fill="#c6c6c6"/></svg>
<svg class="a" style="left:55px;top:858px;" width="6" height="9" viewBox="0 0 6 9"><path d="M0.5 0.5v8L5 4.5z" fill="#c6c6c6"/></svg>
<svg class="a" style="left:213px;top:854px;" width="18" height="18" viewBox="0 0 18 18"><circle cx="9" cy="9" r="7.5" fill="none" stroke="#777" stroke-width="1.1"/><path d="M9 5v8M5 9h8" stroke="#666" stroke-width="1.4"/></svg>
<div class="a" style="left:960px;top:858px;width:2px;height:2px;background:#a9a9a9;"></div>
<div class="a" style="left:960px;top:862px;width:2px;height:2px;background:#a9a9a9;"></div>
<div class="a" style="left:960px;top:866px;width:2px;height:2px;background:#a9a9a9;"></div>
<div class="a" style="left:992px;top:856px;width:572px;height:15px;background:#f0f0f0;"></div>
<div class="a" style="left:977px;top:856px;width:15px;height:15px;background:#fff;border:1px solid #999;"></div>
<svg class="a" style="left:982px;top:859.5px;" width="5" height="8" viewBox="0 0 5 8"><path d="M4.5 0v8L0 4z" fill="#333"/></svg>
<div class="a" style="left:992px;top:856px;width:508px;height:15px;background:#fff;border:1px solid #999;"></div>
<div class="a" style="left:1564px;top:856px;width:15px;height:15px;background:#fff;border:1px solid #999;"></div>
<svg class="a" style="left:1569px;top:859.5px;" width="5" height="8" viewBox="0 0 5 8"><path d="M0 0v8L4.5 4z" fill="#333"/></svg>
<span class="t" style="top:879.5px;height:18px;line-height:18px;font-size:12px;color:#444444;left:12px;letter-spacing:-0.393px;">Pronto</span>
<svg class="a" style="left:64px;top:880px;" width="18" height="16" viewBox="0 0 18 16"><path d="M7.5 1.5v6M5 5.5l2.5 2.5L10 5.5" fill="none" stroke="#555" stroke-width="1.2"/><path d="M5 3.5a5.5 5.5 0 1 0 7 1" fill="none" stroke="#555" stroke-width="1.1" stroke-dasharray="3 1.5"/><path d="M8.5 11l2.5 2.5L15.5 9" fill="none" stroke="#444" stroke-width="1.6"/></svg>
<span class="t" style="top:879.5px;height:18px;line-height:18px;font-size:12px;color:#444444;left:84px;letter-spacing:-0.183px;">Acessibilidade: tudo certo</span>
<div class="a" style="left:1300px;top:878px;width:40px;height:20px;background:#c6c6c6;"></div>
<svg class="a" style="left:1313px;top:881px;" width="14" height="14" viewBox="0 0 14 14"><path d="M0.5 0.5h12v12h-12zM0.5 4.5h12M0.5 8.5h12M4.5 0.5v12M8.5 0.5v12" fill="none" stroke="#666" stroke-width="1.2"/></svg>
<svg class="a" style="left:1353px;top:881px;" width="14" height="14" viewBox="0 0 14 14"><path d="M0.5 0.5h13v12h-13z" fill="none" stroke="#666" stroke-width="1.2"/><path d="M3.5 2.5h7v8h-7zM5 4.5h4M5 6.5h4M5 8.5h4" fill="none" stroke="#666"/></svg>
<svg class="a" style="left:1393px;top:881px;" width="14" height="14" viewBox="0 0 14 14"><path d="M0.5 0.5h13v12h-13z" fill="none" stroke="#666" stroke-width="1.2"/><path d="M4.5 0.5v6M7.5 0.5v6M0.5 6.5h8" fill="none" stroke="#666"/></svg>
<div class="a" style="left:1426px;top:888px;width:8px;height:1px;background:#555;"></div>
<div class="a" style="left:1439px;top:888px;width:100px;height:1px;background:#777;"></div>
<div class="a" style="left:1487px;top:883px;width:5px;height:11px;background:#444;"></div>
<div class="a" style="left:1544px;top:888px;width:8px;height:1px;background:#555;"></div>
<div class="a" style="left:1547.5px;top:884.5px;width:1px;height:8px;background:#555;"></div>
<span class="t" style="top:879.5px;height:18px;line-height:18px;font-size:12px;color:#444444;left:1565px;letter-spacing:-0.926px;">100%</span>
</body></html>
